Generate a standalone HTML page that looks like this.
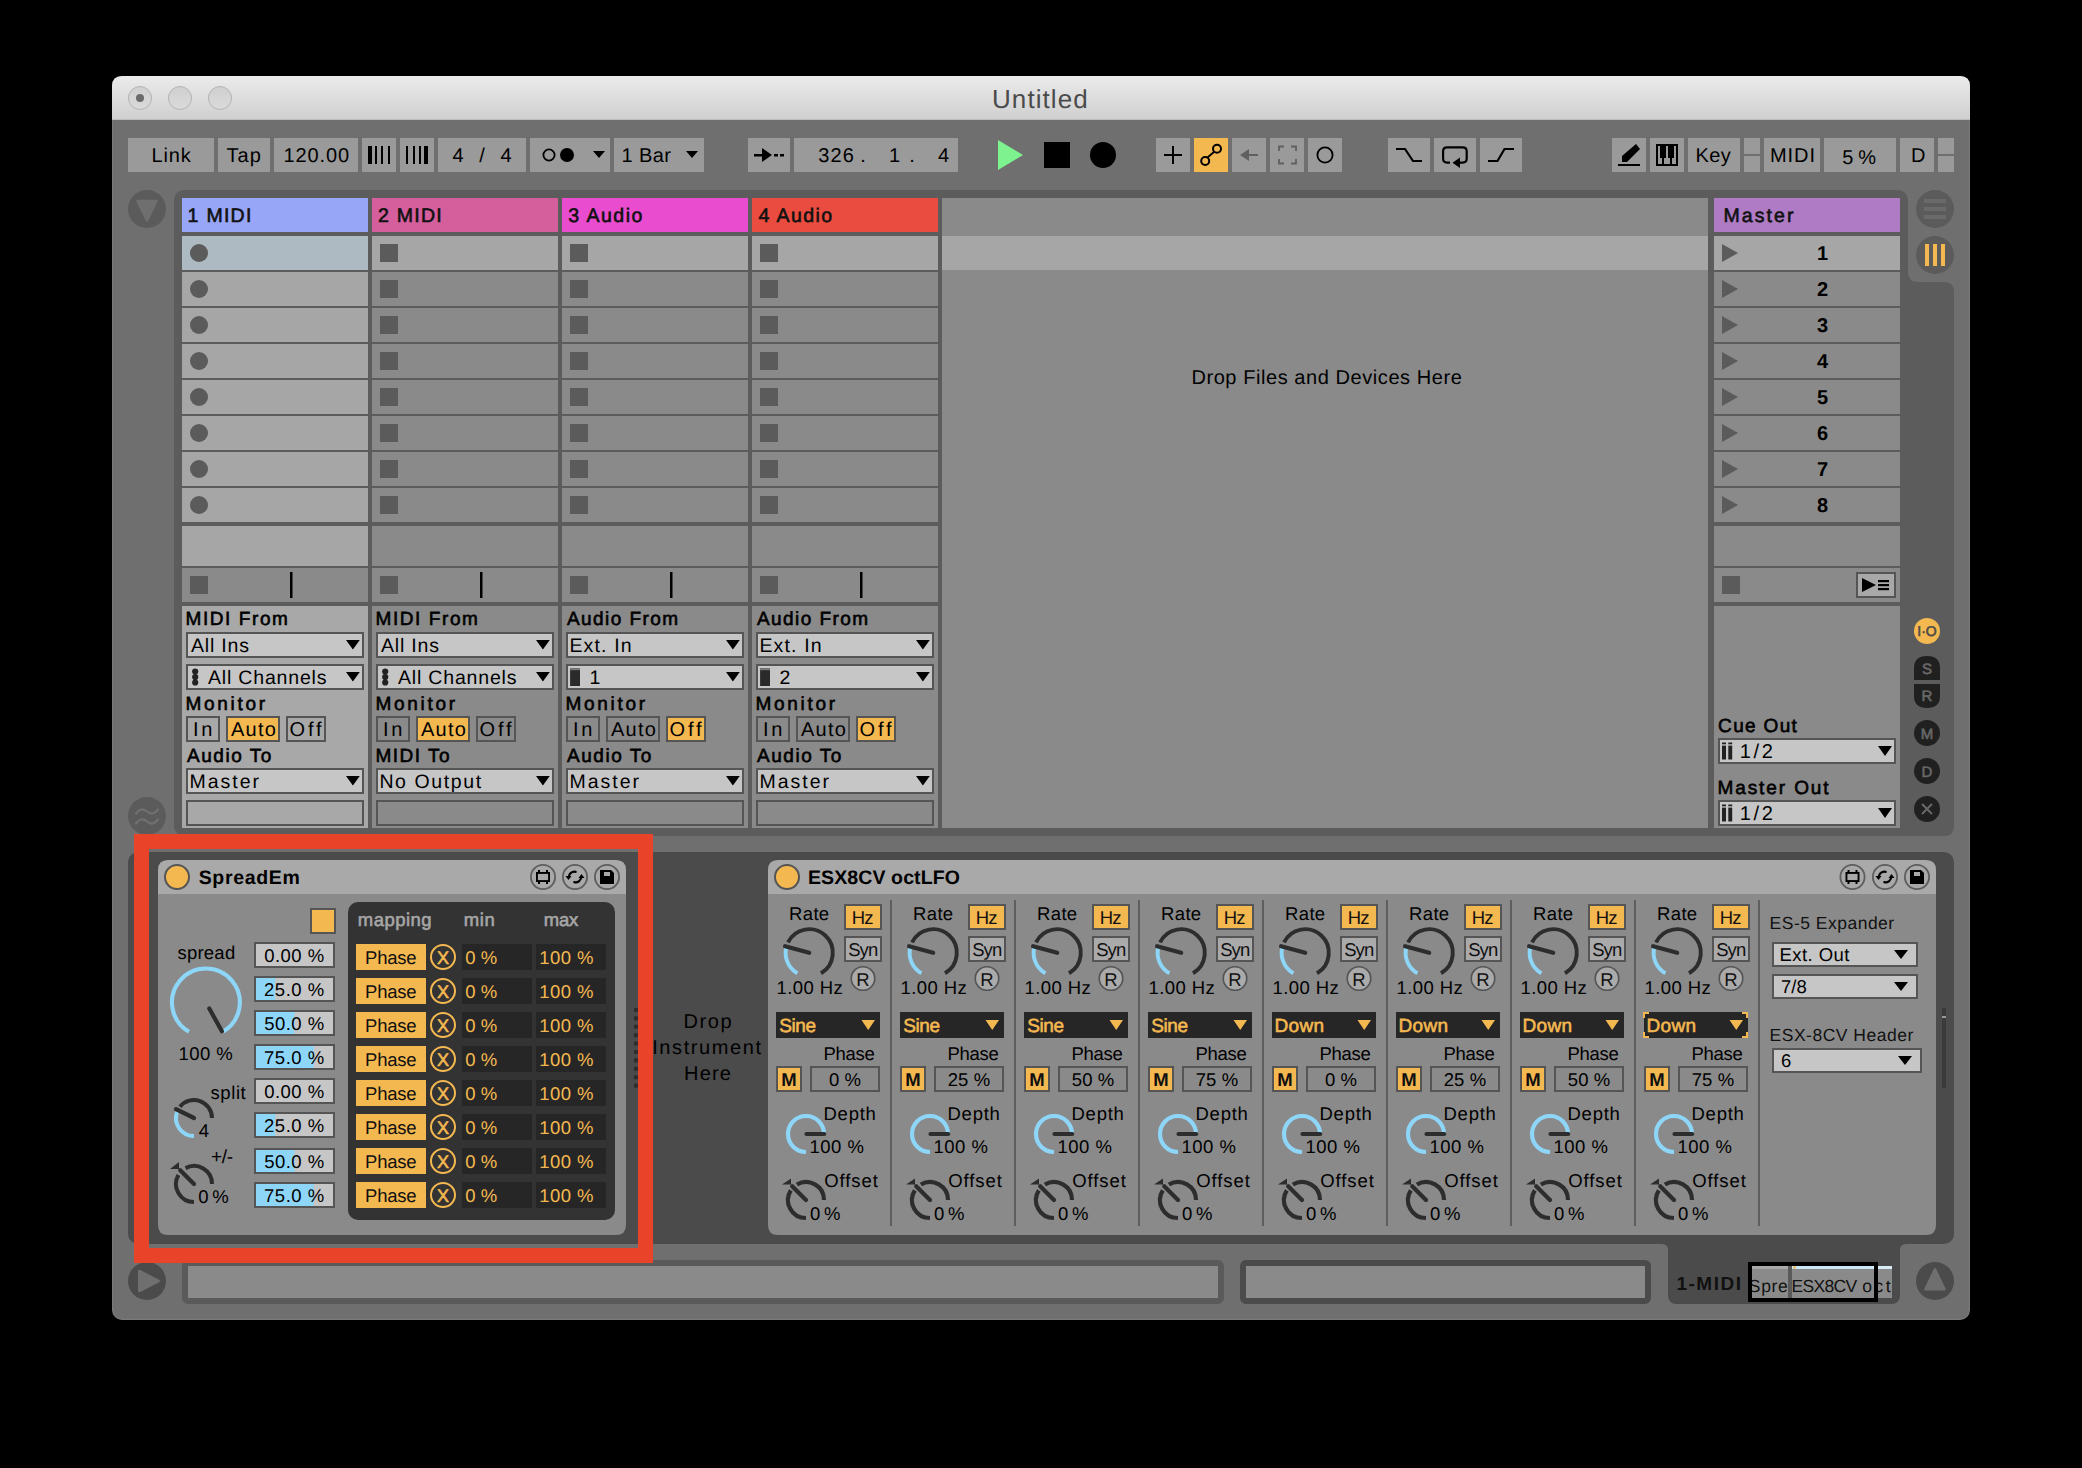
<!DOCTYPE html>
<html><head><meta charset="utf-8"><title>Untitled</title>
<style>html,body{margin:0;padding:0;background:#000;width:2082px;height:1468px;overflow:hidden}svg{display:block}</style>
</head><body>
<svg width="2082" height="1468" viewBox="0 0 2082 1468" text-rendering="geometricPrecision">
<rect x="0" y="0" width="2082" height="1468" rx="0" fill="#000" />
<rect x="112.6" y="76.6" width="1856.8" height="1242.8" rx="9.4" fill="#6f6f6f" stroke="#7a7a7a" stroke-width="1.2" />
<defs><linearGradient id="tg" x1="0" y1="0" x2="0" y2="1"><stop offset="0" stop-color="#ebebeb"/><stop offset="1" stop-color="#cfcfcf"/></linearGradient><linearGradient id="tl" x1="0" y1="0" x2="0" y2="1"><stop offset="0" stop-color="#d0d0d0"/><stop offset="1" stop-color="#dadada"/></linearGradient></defs>
<path d="M112,120 L112,86 Q112,76 122,76 L1960,76 Q1970,76 1970,86 L1970,120 Z" fill="url(#tg)" />
<rect x="112" y="119" width="1858" height="1" rx="0" fill="#bdbdbd" />
<circle cx="140" cy="98" r="11.5" fill="url(#tl)" stroke="#b3b3b3" stroke-width="1"/>
<circle cx="180" cy="98" r="11.5" fill="url(#tl)" stroke="#b3b3b3" stroke-width="1"/>
<circle cx="220" cy="98" r="11.5" fill="url(#tl)" stroke="#b3b3b3" stroke-width="1"/>
<circle cx="140" cy="98" r="4" fill="#6a6a6a"/>
<text x="992.0" y="108" font-family="Liberation Sans" font-size="26" font-weight="400" fill="#4b4b4b" text-anchor="start" letter-spacing="1.07" >Untitled</text>
<rect x="128" y="138" width="86" height="34" rx="0" fill="#9a9a9a" />
<rect x="218" y="138" width="52" height="34" rx="0" fill="#9a9a9a" />
<rect x="274" y="138" width="84" height="34" rx="0" fill="#9a9a9a" />
<rect x="362" y="138" width="34" height="34" rx="0" fill="#9a9a9a" />
<rect x="400" y="138" width="34" height="34" rx="0" fill="#9a9a9a" />
<rect x="438" y="138" width="88" height="34" rx="0" fill="#9a9a9a" />
<rect x="530" y="138" width="80" height="34" rx="0" fill="#9a9a9a" />
<rect x="614" y="138" width="90" height="34" rx="0" fill="#9a9a9a" />
<rect x="748" y="138" width="42" height="34" rx="0" fill="#9a9a9a" />
<rect x="794" y="138" width="164" height="34" rx="0" fill="#9a9a9a" />
<rect x="1156" y="138" width="34" height="34" rx="0" fill="#9a9a9a" />
<rect x="1194" y="138" width="34" height="34" rx="0" fill="#f4b850" />
<rect x="1232" y="138" width="34" height="34" rx="0" fill="#9a9a9a" />
<rect x="1270" y="138" width="34" height="34" rx="0" fill="#9a9a9a" />
<rect x="1308" y="138" width="34" height="34" rx="0" fill="#9a9a9a" />
<rect x="1388" y="138" width="42" height="34" rx="0" fill="#9a9a9a" />
<rect x="1434" y="138" width="42" height="34" rx="0" fill="#9a9a9a" />
<rect x="1480" y="138" width="42" height="34" rx="0" fill="#9a9a9a" />
<rect x="1612" y="138" width="34" height="34" rx="0" fill="#9a9a9a" />
<rect x="1650" y="138" width="34" height="34" rx="0" fill="#9a9a9a" />
<rect x="1688" y="138" width="52" height="34" rx="0" fill="#9a9a9a" />
<rect x="1764" y="138" width="56" height="34" rx="0" fill="#9a9a9a" />
<rect x="1824" y="138" width="72" height="34" rx="0" fill="#9a9a9a" />
<rect x="1900" y="138" width="34" height="34" rx="0" fill="#9a9a9a" />
<rect x="1744" y="138" width="16" height="16" rx="0" fill="#9a9a9a" />
<rect x="1744" y="156" width="16" height="16" rx="0" fill="#9a9a9a" />
<rect x="1938" y="138" width="16" height="16" rx="0" fill="#9a9a9a" />
<rect x="1938" y="156" width="16" height="16" rx="0" fill="#9a9a9a" />
<text x="151.4" y="162" font-family="Liberation Sans" font-size="20" font-weight="400" fill="#000" text-anchor="start" letter-spacing="0.93" >Link</text>
<text x="226.6" y="162" font-family="Liberation Sans" font-size="20" font-weight="400" fill="#000" text-anchor="start" letter-spacing="1.0" >Tap</text>
<text x="283.5" y="162" font-family="Liberation Sans" font-size="20" font-weight="400" fill="#000" text-anchor="start" letter-spacing="0.88" >120.00</text>
<rect x="368" y="146" width="4" height="18" rx="0" fill="#000" />
<rect x="375" y="146" width="2" height="18" rx="0" fill="#000" />
<rect x="381" y="146" width="2" height="18" rx="0" fill="#000" />
<rect x="388" y="146" width="2" height="18" rx="0" fill="#000" />
<rect x="406" y="146" width="2" height="18" rx="0" fill="#000" />
<rect x="413" y="146" width="2" height="18" rx="0" fill="#000" />
<rect x="419" y="146" width="2" height="18" rx="0" fill="#000" />
<rect x="424" y="146" width="4" height="18" rx="0" fill="#000" />
<text x="458" y="162" font-family="Liberation Sans" font-size="20" font-weight="400" fill="#000" text-anchor="middle" >4</text>
<text x="482" y="162" font-family="Liberation Sans" font-size="20" font-weight="400" fill="#000" text-anchor="middle" >/</text>
<text x="506" y="162" font-family="Liberation Sans" font-size="20" font-weight="400" fill="#000" text-anchor="middle" >4</text>
<circle cx="549" cy="155" r="5.6" fill="none" stroke="#000" stroke-width="1.8"/>
<circle cx="567" cy="155" r="7" fill="#000"/>
<polygon points="593,151 605,151 599,158" fill="#000"/>
<text x="621.5" y="162" font-family="Liberation Sans" font-size="20" font-weight="400" fill="#000" text-anchor="start" letter-spacing="0.4" >1 Bar</text>
<polygon points="686,151 698,151 692,158" fill="#000"/>
<rect x="754" y="154" width="8" height="2.5" rx="0" fill="#000" />
<polygon points="762,148 772,155 762,162" fill="#000"/>
<rect x="774" y="154" width="4" height="2.5" rx="0" fill="#000" />
<rect x="780" y="154" width="4" height="2.5" rx="0" fill="#000" />
<text x="818.3" y="162" font-family="Liberation Sans" font-size="20" font-weight="400" fill="#000" text-anchor="start" letter-spacing="1.1" >326</text>
<text x="863" y="162" font-family="Liberation Sans" font-size="20" font-weight="400" fill="#000" text-anchor="middle" >.</text>
<text x="900" y="162" font-family="Liberation Sans" font-size="20" font-weight="400" fill="#000" text-anchor="end" >1</text>
<text x="912" y="162" font-family="Liberation Sans" font-size="20" font-weight="400" fill="#000" text-anchor="middle" >.</text>
<text x="949" y="162" font-family="Liberation Sans" font-size="20" font-weight="400" fill="#000" text-anchor="end" >4</text>
<polygon points="998,140 1023,155 998,170" fill="#7ef28f"/>
<rect x="1044" y="142" width="26" height="26" rx="0" fill="#000" />
<circle cx="1103" cy="155" r="13" fill="#000"/>
<rect x="1164" y="154" width="18" height="2" rx="0" fill="#000" />
<rect x="1172" y="146" width="2" height="18" rx="0" fill="#000" />
<circle cx="1205.2" cy="161" r="4.0" fill="none" stroke="#000" stroke-width="2"/>
<circle cx="1217" cy="148.7" r="4.0" fill="none" stroke="#000" stroke-width="2"/>
<line x1="1207.5" y1="157.5" x2="1214.5" y2="151.5" stroke="#000" stroke-width="1.8"/>
<polygon points="1240,155 1249,149 1249,161" fill="#606060"/>
<rect x="1248" y="154" width="10" height="2" rx="0" fill="#606060" />
<path d="M1279,151 V146.5 H1284 M1291,146.5 H1296 V151 M1296,159 V163.5 H1291 M1284,163.5 H1279 V159" fill="none" stroke="#606060" stroke-width="1.8" />
<circle cx="1325" cy="155" r="7.6" fill="none" stroke="#000" stroke-width="1.8"/>
<path d="M1396,149 H1405 L1413,161 H1422" fill="none" stroke="#000" stroke-width="2.2" />
<path d="M1450,162.6 H1447 Q1443.1,162.6 1443.1,158.6 V151.2 Q1443.1,147.3 1447,147.3 H1462.7 Q1466.7,147.3 1466.7,151.2 V158.6 Q1466.7,162.6 1462.7,162.6 H1459" fill="none" stroke="#000" stroke-width="2.2" />
<polygon points="1452.5,162.7 1460,157.5 1460,168" fill="#000"/>
<path d="M1488,161 H1497.5 L1504.5,149 H1514" fill="none" stroke="#000" stroke-width="2.2" />
<polygon points="1622,162 1622,156 1636,144 1640,149 1627,162" fill="#000"/>
<rect x="1618" y="164" width="22" height="2" rx="0" fill="#000" />
<rect x="1657.0" y="145.0" width="20" height="20" rx="0" fill="none" stroke="#000" stroke-width="2" />
<rect x="1660" y="146" width="6" height="12" rx="0" fill="#000" />
<rect x="1668" y="146" width="6" height="12" rx="0" fill="#000" />
<rect x="1662" y="158" width="2" height="6" rx="0" fill="#000" />
<rect x="1670" y="158" width="2" height="6" rx="0" fill="#000" />
<text x="1695.4" y="162" font-family="Liberation Sans" font-size="20" font-weight="400" fill="#000" text-anchor="start" letter-spacing="0.5" >Key</text>
<text x="1769.9" y="162" font-family="Liberation Sans" font-size="20" font-weight="400" fill="#000" text-anchor="start" letter-spacing="0.97" >MIDI</text>
<text x="1842.2" y="164" font-family="Liberation Sans" font-size="20" font-weight="400" fill="#000" text-anchor="start" letter-spacing="-0.3" >5 %</text>
<text x="1911" y="162" font-family="Liberation Sans" font-size="20" font-weight="400" fill="#000" text-anchor="start" >D</text>
<circle cx="147" cy="209" r="19" fill="#5b5b5b"/>
<path d="M137.5,201 L156.5,201 L147,220.5 Z" fill="#6f6f6f" stroke="#6f6f6f" stroke-width="2.5" stroke-linejoin="round"/>
<circle cx="147" cy="816" r="19" fill="#5b5b5b"/>
<path d="M136,813.5 Q141,806.5 147,811.5 Q153,816.5 158,809.5" fill="none" stroke="#717171" stroke-width="2.2" stroke-linecap="round"/>
<path d="M136,823.5 Q141,816.5 147,821.5 Q153,826.5 158,819.5" fill="none" stroke="#717171" stroke-width="2.2" stroke-linecap="round"/>
<rect x="174" y="190" width="1734" height="646" rx="10" fill="#5c5c5c" />
<path d="M1898,282 L1944,282 Q1954,282 1954,292 L1954,826 Q1954,836 1944,836 L1898,836 Z" fill="#5c5c5c" />
<path d="M1908,272 L1908,282 L1918,282 Q1908,282 1908,272 Z" fill="#5c5c5c" />
<circle cx="1935" cy="209" r="19" fill="#5b5b5b"/>
<rect x="1924" y="199" width="22" height="4" rx="0" fill="#6a6a6a" />
<rect x="1924" y="207" width="22" height="4" rx="0" fill="#6a6a6a" />
<rect x="1924" y="215" width="22" height="4" rx="0" fill="#6a6a6a" />
<circle cx="1935" cy="255" r="19" fill="#5b5b5b"/>
<rect x="1925" y="244" width="4" height="22" rx="0" fill="#f4b850" />
<rect x="1933" y="244" width="4" height="22" rx="0" fill="#f4b850" />
<rect x="1941" y="244" width="4" height="22" rx="0" fill="#f4b850" />
<rect x="182" y="198" width="186" height="34" rx="0" fill="#97a6f6" />
<text x="187.6" y="222" font-family="Liberation Sans" font-size="19.5" font-weight="400" fill="#111" text-anchor="start" letter-spacing="1.26" stroke="#111" stroke-width="0.6" >1 MIDI</text>
<rect x="182" y="236" width="186" height="34" rx="0" fill="#adbac2" />
<circle cx="199" cy="253" r="9" fill="#5b5b5b"/>
<rect x="182" y="272" width="186" height="34" rx="0" fill="#a6a6a6" />
<circle cx="199" cy="289" r="9" fill="#5b5b5b"/>
<rect x="182" y="308" width="186" height="34" rx="0" fill="#a6a6a6" />
<circle cx="199" cy="325" r="9" fill="#5b5b5b"/>
<rect x="182" y="344" width="186" height="34" rx="0" fill="#a6a6a6" />
<circle cx="199" cy="361" r="9" fill="#5b5b5b"/>
<rect x="182" y="380" width="186" height="34" rx="0" fill="#a6a6a6" />
<circle cx="199" cy="397" r="9" fill="#5b5b5b"/>
<rect x="182" y="416" width="186" height="34" rx="0" fill="#a6a6a6" />
<circle cx="199" cy="433" r="9" fill="#5b5b5b"/>
<rect x="182" y="452" width="186" height="34" rx="0" fill="#a6a6a6" />
<circle cx="199" cy="469" r="9" fill="#5b5b5b"/>
<rect x="182" y="488" width="186" height="34" rx="0" fill="#a6a6a6" />
<circle cx="199" cy="505" r="9" fill="#5b5b5b"/>
<rect x="182" y="526" width="186" height="40" rx="0" fill="#a6a6a6" />
<rect x="182" y="568" width="186" height="34" rx="0" fill="#8a8a8a" />
<rect x="190" y="576" width="18" height="18" rx="0" fill="#5b5b5b" />
<rect x="290" y="572" width="2.5" height="26" rx="0" fill="#000" />
<rect x="182" y="606" width="186" height="222" rx="0" fill="#a8a8a8" />
<text x="185.5" y="625" font-family="Liberation Sans" font-size="19" font-weight="400" fill="#000" text-anchor="start" letter-spacing="1.59" stroke="#000" stroke-width="0.6" >MIDI From</text>
<rect x="187.0" y="633.0" width="176" height="24" rx="0" fill="#c6c6c6" stroke="#555555" stroke-width="2" />
<text x="191.0" y="652" font-family="Liberation Sans" font-size="19.5" font-weight="400" fill="#000" text-anchor="start" letter-spacing="0.8" >All Ins</text>
<polygon points="346,640 359.8,640 352.9,649.5" fill="#000"/>
<rect x="187.0" y="665.0" width="176" height="24" rx="0" fill="#c6c6c6" stroke="#555555" stroke-width="2" />
<circle cx="195.2" cy="671.5" r="3.1" fill="#222"/>
<circle cx="195.2" cy="677.0" r="3.1" fill="#222"/>
<circle cx="195.2" cy="682.5" r="3.1" fill="#222"/>
<text x="208.0" y="684" font-family="Liberation Sans" font-size="19.5" font-weight="400" fill="#000" text-anchor="start" letter-spacing="0.82" >All Channels</text>
<polygon points="346,672 359.8,672 352.9,681.5" fill="#000"/>
<text x="185.5" y="710" font-family="Liberation Sans" font-size="19" font-weight="400" fill="#000" text-anchor="start" letter-spacing="2.72" stroke="#000" stroke-width="0.6" >Monitor</text>
<rect x="187.0" y="717.0" width="32" height="24" rx="0" fill="#a8a8a8" stroke="#555555" stroke-width="2" />
<text x="193.05" y="736" font-family="Liberation Sans" font-size="20" font-weight="400" fill="#000" text-anchor="start" letter-spacing="2.6" >In</text>
<rect x="227.0" y="717.0" width="52" height="24" rx="0" fill="#f4b850" stroke="#555555" stroke-width="2" />
<text x="230.9" y="736" font-family="Liberation Sans" font-size="20" font-weight="400" fill="#000" text-anchor="start" letter-spacing="1.3" >Auto</text>
<rect x="287.0" y="717.0" width="38" height="24" rx="0" fill="#a8a8a8" stroke="#555555" stroke-width="2" />
<text x="289.5" y="736" font-family="Liberation Sans" font-size="20" font-weight="400" fill="#000" text-anchor="start" letter-spacing="2.85" >Off</text>
<text x="187.0" y="762" font-family="Liberation Sans" font-size="19" font-weight="400" fill="#000" text-anchor="start" letter-spacing="1.53" stroke="#000" stroke-width="0.6" >Audio To</text>
<rect x="187.0" y="769.0" width="176" height="24" rx="0" fill="#c6c6c6" stroke="#555555" stroke-width="2" />
<text x="189.4" y="788" font-family="Liberation Sans" font-size="19.5" font-weight="400" fill="#000" text-anchor="start" letter-spacing="2.02" >Master</text>
<polygon points="346,776 359.8,776 352.9,785.5" fill="#000"/>
<rect x="187.0" y="801.0" width="176" height="24" rx="0" fill="#a8a8a8" stroke="#555555" stroke-width="2" />
<rect x="372" y="198" width="186" height="34" rx="0" fill="#d55e9c" />
<text x="378.1" y="222" font-family="Liberation Sans" font-size="19.5" font-weight="400" fill="#111" text-anchor="start" letter-spacing="1.24" stroke="#111" stroke-width="0.6" >2 MIDI</text>
<rect x="372" y="236" width="186" height="34" rx="0" fill="#a6a6a6" />
<rect x="380" y="244" width="18" height="18" rx="0" fill="#5b5b5b" />
<rect x="372" y="272" width="186" height="34" rx="0" fill="#8a8a8a" />
<rect x="380" y="280" width="18" height="18" rx="0" fill="#5b5b5b" />
<rect x="372" y="308" width="186" height="34" rx="0" fill="#8a8a8a" />
<rect x="380" y="316" width="18" height="18" rx="0" fill="#5b5b5b" />
<rect x="372" y="344" width="186" height="34" rx="0" fill="#8a8a8a" />
<rect x="380" y="352" width="18" height="18" rx="0" fill="#5b5b5b" />
<rect x="372" y="380" width="186" height="34" rx="0" fill="#8a8a8a" />
<rect x="380" y="388" width="18" height="18" rx="0" fill="#5b5b5b" />
<rect x="372" y="416" width="186" height="34" rx="0" fill="#8a8a8a" />
<rect x="380" y="424" width="18" height="18" rx="0" fill="#5b5b5b" />
<rect x="372" y="452" width="186" height="34" rx="0" fill="#8a8a8a" />
<rect x="380" y="460" width="18" height="18" rx="0" fill="#5b5b5b" />
<rect x="372" y="488" width="186" height="34" rx="0" fill="#8a8a8a" />
<rect x="380" y="496" width="18" height="18" rx="0" fill="#5b5b5b" />
<rect x="372" y="526" width="186" height="40" rx="0" fill="#8a8a8a" />
<rect x="372" y="568" width="186" height="34" rx="0" fill="#8a8a8a" />
<rect x="380" y="576" width="18" height="18" rx="0" fill="#5b5b5b" />
<rect x="480" y="572" width="2.5" height="26" rx="0" fill="#000" />
<rect x="372" y="606" width="186" height="222" rx="0" fill="#8a8a8a" />
<text x="375.5" y="625" font-family="Liberation Sans" font-size="19" font-weight="400" fill="#000" text-anchor="start" letter-spacing="1.59" stroke="#000" stroke-width="0.6" >MIDI From</text>
<rect x="377.0" y="633.0" width="176" height="24" rx="0" fill="#c6c6c6" stroke="#555555" stroke-width="2" />
<text x="381.0" y="652" font-family="Liberation Sans" font-size="19.5" font-weight="400" fill="#000" text-anchor="start" letter-spacing="0.8" >All Ins</text>
<polygon points="536,640 549.8,640 542.9,649.5" fill="#000"/>
<rect x="377.0" y="665.0" width="176" height="24" rx="0" fill="#c6c6c6" stroke="#555555" stroke-width="2" />
<circle cx="385.2" cy="671.5" r="3.1" fill="#222"/>
<circle cx="385.2" cy="677.0" r="3.1" fill="#222"/>
<circle cx="385.2" cy="682.5" r="3.1" fill="#222"/>
<text x="398.0" y="684" font-family="Liberation Sans" font-size="19.5" font-weight="400" fill="#000" text-anchor="start" letter-spacing="0.82" >All Channels</text>
<polygon points="536,672 549.8,672 542.9,681.5" fill="#000"/>
<text x="375.5" y="710" font-family="Liberation Sans" font-size="19" font-weight="400" fill="#000" text-anchor="start" letter-spacing="2.72" stroke="#000" stroke-width="0.6" >Monitor</text>
<rect x="377.0" y="717.0" width="32" height="24" rx="0" fill="#8a8a8a" stroke="#555555" stroke-width="2" />
<text x="383.05" y="736" font-family="Liberation Sans" font-size="20" font-weight="400" fill="#000" text-anchor="start" letter-spacing="2.6" >In</text>
<rect x="417.0" y="717.0" width="52" height="24" rx="0" fill="#f4b850" stroke="#555555" stroke-width="2" />
<text x="420.9" y="736" font-family="Liberation Sans" font-size="20" font-weight="400" fill="#000" text-anchor="start" letter-spacing="1.3" >Auto</text>
<rect x="477.0" y="717.0" width="38" height="24" rx="0" fill="#8a8a8a" stroke="#555555" stroke-width="2" />
<text x="479.5" y="736" font-family="Liberation Sans" font-size="20" font-weight="400" fill="#000" text-anchor="start" letter-spacing="2.85" >Off</text>
<text x="375.5" y="762" font-family="Liberation Sans" font-size="19" font-weight="400" fill="#000" text-anchor="start" letter-spacing="1.5" stroke="#000" stroke-width="0.6" >MIDI To</text>
<rect x="377.0" y="769.0" width="176" height="24" rx="0" fill="#c6c6c6" stroke="#555555" stroke-width="2" />
<text x="379.4" y="788" font-family="Liberation Sans" font-size="19.5" font-weight="400" fill="#000" text-anchor="start" letter-spacing="1.6" >No Output</text>
<polygon points="536,776 549.8,776 542.9,785.5" fill="#000"/>
<rect x="377.0" y="801.0" width="176" height="24" rx="0" fill="#8a8a8a" stroke="#555555" stroke-width="2" />
<rect x="562" y="198" width="186" height="34" rx="0" fill="#ea4ccf" />
<text x="568.3" y="222" font-family="Liberation Sans" font-size="19.5" font-weight="400" fill="#111" text-anchor="start" letter-spacing="1.5" stroke="#111" stroke-width="0.6" >3 Audio</text>
<rect x="562" y="236" width="186" height="34" rx="0" fill="#a6a6a6" />
<rect x="570" y="244" width="18" height="18" rx="0" fill="#5b5b5b" />
<rect x="562" y="272" width="186" height="34" rx="0" fill="#8a8a8a" />
<rect x="570" y="280" width="18" height="18" rx="0" fill="#5b5b5b" />
<rect x="562" y="308" width="186" height="34" rx="0" fill="#8a8a8a" />
<rect x="570" y="316" width="18" height="18" rx="0" fill="#5b5b5b" />
<rect x="562" y="344" width="186" height="34" rx="0" fill="#8a8a8a" />
<rect x="570" y="352" width="18" height="18" rx="0" fill="#5b5b5b" />
<rect x="562" y="380" width="186" height="34" rx="0" fill="#8a8a8a" />
<rect x="570" y="388" width="18" height="18" rx="0" fill="#5b5b5b" />
<rect x="562" y="416" width="186" height="34" rx="0" fill="#8a8a8a" />
<rect x="570" y="424" width="18" height="18" rx="0" fill="#5b5b5b" />
<rect x="562" y="452" width="186" height="34" rx="0" fill="#8a8a8a" />
<rect x="570" y="460" width="18" height="18" rx="0" fill="#5b5b5b" />
<rect x="562" y="488" width="186" height="34" rx="0" fill="#8a8a8a" />
<rect x="570" y="496" width="18" height="18" rx="0" fill="#5b5b5b" />
<rect x="562" y="526" width="186" height="40" rx="0" fill="#8a8a8a" />
<rect x="562" y="568" width="186" height="34" rx="0" fill="#8a8a8a" />
<rect x="570" y="576" width="18" height="18" rx="0" fill="#5b5b5b" />
<rect x="670" y="572" width="2.5" height="26" rx="0" fill="#000" />
<rect x="562" y="606" width="186" height="222" rx="0" fill="#8a8a8a" />
<text x="567.0" y="625" font-family="Liberation Sans" font-size="19" font-weight="400" fill="#000" text-anchor="start" letter-spacing="1.42" stroke="#000" stroke-width="0.6" >Audio From</text>
<rect x="567.0" y="633.0" width="176" height="24" rx="0" fill="#c6c6c6" stroke="#555555" stroke-width="2" />
<text x="569.4" y="652" font-family="Liberation Sans" font-size="19.5" font-weight="400" fill="#000" text-anchor="start" letter-spacing="1.15" >Ext. In</text>
<polygon points="726,640 739.8,640 732.9,649.5" fill="#000"/>
<rect x="567.0" y="665.0" width="176" height="24" rx="0" fill="#c6c6c6" stroke="#555555" stroke-width="2" />
<rect x="570.1" y="668.2" width="9.899999999999977" height="17.799999999999955" rx="0" fill="#2a2a2a" />
<rect x="570.1" y="668.2" width="9.899999999999977" height="2.0" rx="0" fill="#7a7a7a" />
<text x="589.5" y="684" font-family="Liberation Sans" font-size="19.5" font-weight="400" fill="#000" text-anchor="start" >1</text>
<polygon points="726,672 739.8,672 732.9,681.5" fill="#000"/>
<text x="565.5" y="710" font-family="Liberation Sans" font-size="19" font-weight="400" fill="#000" text-anchor="start" letter-spacing="2.72" stroke="#000" stroke-width="0.6" >Monitor</text>
<rect x="567.0" y="717.0" width="32" height="24" rx="0" fill="#8a8a8a" stroke="#555555" stroke-width="2" />
<text x="573.05" y="736" font-family="Liberation Sans" font-size="20" font-weight="400" fill="#000" text-anchor="start" letter-spacing="2.6" >In</text>
<rect x="607.0" y="717.0" width="52" height="24" rx="0" fill="#8a8a8a" stroke="#555555" stroke-width="2" />
<text x="610.9" y="736" font-family="Liberation Sans" font-size="20" font-weight="400" fill="#000" text-anchor="start" letter-spacing="1.3" >Auto</text>
<rect x="667.0" y="717.0" width="38" height="24" rx="0" fill="#f4b850" stroke="#555555" stroke-width="2" />
<text x="669.5" y="736" font-family="Liberation Sans" font-size="20" font-weight="400" fill="#000" text-anchor="start" letter-spacing="2.85" >Off</text>
<text x="567.0" y="762" font-family="Liberation Sans" font-size="19" font-weight="400" fill="#000" text-anchor="start" letter-spacing="1.53" stroke="#000" stroke-width="0.6" >Audio To</text>
<rect x="567.0" y="769.0" width="176" height="24" rx="0" fill="#c6c6c6" stroke="#555555" stroke-width="2" />
<text x="569.4" y="788" font-family="Liberation Sans" font-size="19.5" font-weight="400" fill="#000" text-anchor="start" letter-spacing="2.02" >Master</text>
<polygon points="726,776 739.8,776 732.9,785.5" fill="#000"/>
<rect x="567.0" y="801.0" width="176" height="24" rx="0" fill="#8a8a8a" stroke="#555555" stroke-width="2" />
<rect x="752" y="198" width="186" height="34" rx="0" fill="#ea4c3f" />
<text x="758.6" y="222" font-family="Liberation Sans" font-size="19.5" font-weight="400" fill="#111" text-anchor="start" letter-spacing="1.42" stroke="#111" stroke-width="0.6" >4 Audio</text>
<rect x="752" y="236" width="186" height="34" rx="0" fill="#a6a6a6" />
<rect x="760" y="244" width="18" height="18" rx="0" fill="#5b5b5b" />
<rect x="752" y="272" width="186" height="34" rx="0" fill="#8a8a8a" />
<rect x="760" y="280" width="18" height="18" rx="0" fill="#5b5b5b" />
<rect x="752" y="308" width="186" height="34" rx="0" fill="#8a8a8a" />
<rect x="760" y="316" width="18" height="18" rx="0" fill="#5b5b5b" />
<rect x="752" y="344" width="186" height="34" rx="0" fill="#8a8a8a" />
<rect x="760" y="352" width="18" height="18" rx="0" fill="#5b5b5b" />
<rect x="752" y="380" width="186" height="34" rx="0" fill="#8a8a8a" />
<rect x="760" y="388" width="18" height="18" rx="0" fill="#5b5b5b" />
<rect x="752" y="416" width="186" height="34" rx="0" fill="#8a8a8a" />
<rect x="760" y="424" width="18" height="18" rx="0" fill="#5b5b5b" />
<rect x="752" y="452" width="186" height="34" rx="0" fill="#8a8a8a" />
<rect x="760" y="460" width="18" height="18" rx="0" fill="#5b5b5b" />
<rect x="752" y="488" width="186" height="34" rx="0" fill="#8a8a8a" />
<rect x="760" y="496" width="18" height="18" rx="0" fill="#5b5b5b" />
<rect x="752" y="526" width="186" height="40" rx="0" fill="#8a8a8a" />
<rect x="752" y="568" width="186" height="34" rx="0" fill="#8a8a8a" />
<rect x="760" y="576" width="18" height="18" rx="0" fill="#5b5b5b" />
<rect x="860" y="572" width="2.5" height="26" rx="0" fill="#000" />
<rect x="752" y="606" width="186" height="222" rx="0" fill="#8a8a8a" />
<text x="757.0" y="625" font-family="Liberation Sans" font-size="19" font-weight="400" fill="#000" text-anchor="start" letter-spacing="1.42" stroke="#000" stroke-width="0.6" >Audio From</text>
<rect x="757.0" y="633.0" width="176" height="24" rx="0" fill="#c6c6c6" stroke="#555555" stroke-width="2" />
<text x="759.4" y="652" font-family="Liberation Sans" font-size="19.5" font-weight="400" fill="#000" text-anchor="start" letter-spacing="1.15" >Ext. In</text>
<polygon points="916,640 929.8,640 922.9,649.5" fill="#000"/>
<rect x="757.0" y="665.0" width="176" height="24" rx="0" fill="#c6c6c6" stroke="#555555" stroke-width="2" />
<rect x="760.1" y="668.2" width="9.899999999999977" height="17.799999999999955" rx="0" fill="#2a2a2a" />
<rect x="760.1" y="668.2" width="9.899999999999977" height="2.0" rx="0" fill="#7a7a7a" />
<text x="779.5" y="684" font-family="Liberation Sans" font-size="19.5" font-weight="400" fill="#000" text-anchor="start" >2</text>
<polygon points="916,672 929.8,672 922.9,681.5" fill="#000"/>
<text x="755.5" y="710" font-family="Liberation Sans" font-size="19" font-weight="400" fill="#000" text-anchor="start" letter-spacing="2.72" stroke="#000" stroke-width="0.6" >Monitor</text>
<rect x="757.0" y="717.0" width="32" height="24" rx="0" fill="#8a8a8a" stroke="#555555" stroke-width="2" />
<text x="763.05" y="736" font-family="Liberation Sans" font-size="20" font-weight="400" fill="#000" text-anchor="start" letter-spacing="2.6" >In</text>
<rect x="797.0" y="717.0" width="52" height="24" rx="0" fill="#8a8a8a" stroke="#555555" stroke-width="2" />
<text x="800.9" y="736" font-family="Liberation Sans" font-size="20" font-weight="400" fill="#000" text-anchor="start" letter-spacing="1.3" >Auto</text>
<rect x="857.0" y="717.0" width="38" height="24" rx="0" fill="#f4b850" stroke="#555555" stroke-width="2" />
<text x="859.5" y="736" font-family="Liberation Sans" font-size="20" font-weight="400" fill="#000" text-anchor="start" letter-spacing="2.85" >Off</text>
<text x="757.0" y="762" font-family="Liberation Sans" font-size="19" font-weight="400" fill="#000" text-anchor="start" letter-spacing="1.53" stroke="#000" stroke-width="0.6" >Audio To</text>
<rect x="757.0" y="769.0" width="176" height="24" rx="0" fill="#c6c6c6" stroke="#555555" stroke-width="2" />
<text x="759.4" y="788" font-family="Liberation Sans" font-size="19.5" font-weight="400" fill="#000" text-anchor="start" letter-spacing="2.02" >Master</text>
<polygon points="916,776 929.8,776 922.9,785.5" fill="#000"/>
<rect x="757.0" y="801.0" width="176" height="24" rx="0" fill="#8a8a8a" stroke="#555555" stroke-width="2" />
<rect x="942" y="198" width="766" height="630" rx="0" fill="#8a8a8a" />
<rect x="942" y="236" width="766" height="34" rx="0" fill="#a6a6a6" />
<text x="1191.4" y="384" font-family="Liberation Sans" font-size="20" font-weight="400" fill="#000" text-anchor="start" letter-spacing="0.57" >Drop Files and Devices Here</text>
<rect x="1714" y="198" width="186" height="34" rx="0" fill="#ae7bc4" />
<text x="1723.4" y="222" font-family="Liberation Sans" font-size="19.5" font-weight="400" fill="#111" text-anchor="start" letter-spacing="2.1" stroke="#111" stroke-width="0.6" >Master</text>
<rect x="1714" y="236" width="186" height="34" rx="0" fill="#a6a6a6" />
<polygon points="1722,244 1738,253 1722,262" fill="#5b5b5b"/>
<text x="1822.5" y="260" font-family="Liberation Sans" font-size="20" font-weight="700" fill="#000" text-anchor="middle" >1</text>
<rect x="1714" y="272" width="186" height="34" rx="0" fill="#8a8a8a" />
<polygon points="1722,280 1738,289 1722,298" fill="#5b5b5b"/>
<text x="1822.5" y="296" font-family="Liberation Sans" font-size="20" font-weight="700" fill="#000" text-anchor="middle" >2</text>
<rect x="1714" y="308" width="186" height="34" rx="0" fill="#8a8a8a" />
<polygon points="1722,316 1738,325 1722,334" fill="#5b5b5b"/>
<text x="1822.5" y="332" font-family="Liberation Sans" font-size="20" font-weight="700" fill="#000" text-anchor="middle" >3</text>
<rect x="1714" y="344" width="186" height="34" rx="0" fill="#8a8a8a" />
<polygon points="1722,352 1738,361 1722,370" fill="#5b5b5b"/>
<text x="1822.5" y="368" font-family="Liberation Sans" font-size="20" font-weight="700" fill="#000" text-anchor="middle" >4</text>
<rect x="1714" y="380" width="186" height="34" rx="0" fill="#8a8a8a" />
<polygon points="1722,388 1738,397 1722,406" fill="#5b5b5b"/>
<text x="1822.5" y="404" font-family="Liberation Sans" font-size="20" font-weight="700" fill="#000" text-anchor="middle" >5</text>
<rect x="1714" y="416" width="186" height="34" rx="0" fill="#8a8a8a" />
<polygon points="1722,424 1738,433 1722,442" fill="#5b5b5b"/>
<text x="1822.5" y="440" font-family="Liberation Sans" font-size="20" font-weight="700" fill="#000" text-anchor="middle" >6</text>
<rect x="1714" y="452" width="186" height="34" rx="0" fill="#8a8a8a" />
<polygon points="1722,460 1738,469 1722,478" fill="#5b5b5b"/>
<text x="1822.5" y="476" font-family="Liberation Sans" font-size="20" font-weight="700" fill="#000" text-anchor="middle" >7</text>
<rect x="1714" y="488" width="186" height="34" rx="0" fill="#8a8a8a" />
<polygon points="1722,496 1738,505 1722,514" fill="#5b5b5b"/>
<text x="1822.5" y="512" font-family="Liberation Sans" font-size="20" font-weight="700" fill="#000" text-anchor="middle" >8</text>
<rect x="1714" y="526" width="186" height="40" rx="0" fill="#8a8a8a" />
<rect x="1714" y="568" width="186" height="34" rx="0" fill="#8a8a8a" />
<rect x="1722" y="576" width="18" height="18" rx="0" fill="#5b5b5b" />
<rect x="1857.0" y="573.0" width="38" height="24" rx="0" fill="#a8a8a8" stroke="#555555" stroke-width="2" />
<polygon points="1862,578 1876,585 1862,592" fill="#000"/>
<rect x="1878" y="580" width="11" height="2.2000000000000455" rx="0" fill="#000" />
<rect x="1878" y="584" width="11" height="2.2000000000000455" rx="0" fill="#000" />
<rect x="1878" y="588" width="11" height="2.2000000000000455" rx="0" fill="#000" />
<rect x="1714" y="606" width="186" height="222" rx="0" fill="#8a8a8a" />
<text x="1718.1" y="732" font-family="Liberation Sans" font-size="19" font-weight="400" fill="#000" text-anchor="start" letter-spacing="1.33" stroke="#000" stroke-width="0.6" >Cue Out</text>
<text x="1717.5" y="794" font-family="Liberation Sans" font-size="19" font-weight="400" fill="#000" text-anchor="start" letter-spacing="1.9" stroke="#000" stroke-width="0.6" >Master Out</text>
<rect x="1719.0" y="739.0" width="176" height="24" rx="0" fill="#c6c6c6" stroke="#555555" stroke-width="2" />
<rect x="1722" y="742.5" width="4" height="17.0" rx="0" fill="#222" />
<rect x="1728.3" y="742.5" width="3.900000000000091" height="17.0" rx="0" fill="#222" />
<rect x="1721" y="744.3" width="13" height="1.3000000000000682" rx="0" fill="#c6c6c6" />
<text x="1739.8" y="758" font-family="Liberation Sans" font-size="20" font-weight="400" fill="#000" text-anchor="start" letter-spacing="2.65" >1/2</text>
<polygon points="1878,746 1892,746 1885,756" fill="#000"/>
<rect x="1719.0" y="801.0" width="176" height="24" rx="0" fill="#c6c6c6" stroke="#555555" stroke-width="2" />
<rect x="1722" y="804.5" width="4" height="17.0" rx="0" fill="#222" />
<rect x="1728.3" y="804.5" width="3.900000000000091" height="17.0" rx="0" fill="#222" />
<rect x="1721" y="806.3" width="13" height="1.3000000000000682" rx="0" fill="#c6c6c6" />
<text x="1739.8" y="820" font-family="Liberation Sans" font-size="20" font-weight="400" fill="#000" text-anchor="start" letter-spacing="2.65" >1/2</text>
<polygon points="1878,808 1892,808 1885,818" fill="#000"/>
<circle cx="1927" cy="631" r="13" fill="#f4b850"/>
<text x="1927" y="636" font-family="Liberation Sans" font-size="14" font-weight="400" fill="#4a4a4a" text-anchor="middle" stroke="#4a4a4a" stroke-width="0.6" >I·O</text>
<path d="M1914,680 V668 Q1914,656 1927,656 Q1940,656 1940,668 V680 Z" fill="#202020" />
<path d="M1914,684 V696 Q1914,708 1927,708 Q1940,708 1940,696 V684 Z" fill="#202020" />
<text x="1927" y="674" font-family="Liberation Sans" font-size="15" font-weight="400" fill="#686868" text-anchor="middle" stroke="#686868" stroke-width="0.6" >S</text>
<text x="1927" y="701" font-family="Liberation Sans" font-size="15" font-weight="400" fill="#686868" text-anchor="middle" stroke="#686868" stroke-width="0.6" >R</text>
<circle cx="1927" cy="733" r="13" fill="#202020"/>
<text x="1927" y="738.5" font-family="Liberation Sans" font-size="15" font-weight="400" fill="#686868" text-anchor="middle" stroke="#686868" stroke-width="0.6" >M</text>
<circle cx="1927" cy="771" r="13" fill="#202020"/>
<text x="1927" y="776.5" font-family="Liberation Sans" font-size="15" font-weight="400" fill="#686868" text-anchor="middle" stroke="#686868" stroke-width="0.6" >D</text>
<circle cx="1927" cy="809" r="13" fill="#202020"/>
<path d="M1922,804 L1932,814 M1932,804 L1922,814" fill="none" stroke="#686868" stroke-width="2" />
<rect x="128" y="852" width="1826" height="392" rx="10" fill="#4b4b4b" />
<rect x="1668" y="1234" width="232" height="70" rx="8" fill="#4b4b4b" />
<path d="M158,894 V870 Q158,860 168,860 H616 Q626,860 626,870 V894 Z" fill="#a9a9a9" />
<path d="M158,894 H626 V1225 Q626,1235 616,1235 H168 Q158,1235 158,1225 Z" fill="#8a8a8a" />
<circle cx="177" cy="877" r="12.0" fill="#f4b850" stroke="#555" stroke-width="2"/>
<text x="198.7" y="884" font-family="Liberation Sans" font-size="19.5" font-weight="700" fill="#000" text-anchor="start" letter-spacing="0.66" >SpreadEm</text>
<circle cx="543" cy="877" r="12.1" fill="#a9a9a9" stroke="#5d5d5d" stroke-width="1.8"/>
<rect x="536.95" y="872.95" width="12.1" height="8.1" rx="0" fill="none" stroke="#000" stroke-width="1.9" />
<rect x="538" y="870" width="2" height="2" rx="0" fill="#000" />
<rect x="546" y="870" width="2" height="2" rx="0" fill="#000" />
<rect x="538" y="882" width="2" height="2" rx="0" fill="#000" />
<rect x="546" y="882" width="2" height="2" rx="0" fill="#000" />
<circle cx="575" cy="877" r="12.1" fill="#a9a9a9" stroke="#5d5d5d" stroke-width="1.8"/>
<path d="M575.7,871.8 A5.8,5.8 0 0 0 568.7,877.5" fill="none" stroke="#000" stroke-width="2.2" stroke-linecap="round"/>
<path d="M574.3,882.2 A5.8,5.8 0 0 0 581.3,876.5" fill="none" stroke="#000" stroke-width="2.2" stroke-linecap="round"/>
<polygon points="565.5,876 571.5,876 568.5,880" fill="#000"/>
<polygon points="584.5,878 578.5,878 581.5,874" fill="#000"/>
<circle cx="607" cy="877" r="12.1" fill="#a9a9a9" stroke="#5d5d5d" stroke-width="1.8"/>
<path d="M600,870 H611 L614,873 V884 H600 Z" fill="#000" />
<rect x="604" y="872" width="6" height="4" rx="0" fill="#a9a9a9" />
<rect x="311.0" y="909.0" width="24" height="24" rx="0" fill="#f4b850" stroke="#555" stroke-width="2" />
<text x="177.5" y="959" font-family="Liberation Sans" font-size="18.5" font-weight="400" fill="#000" text-anchor="start" letter-spacing="0.22" >spread</text>
<path d="M188.95,1031.76 A33.9,33.9 0 1 1 222.85,1031.76" fill="none" stroke="#8ed6f8" stroke-width="4.1"/>
<line x1="209.29" y1="1008.52" x2="221.90" y2="1031.26" stroke="#2d2d2d" stroke-width="4.2" stroke-linecap="round"/>
<text x="178.6" y="1060" font-family="Liberation Sans" font-size="18.5" font-weight="400" fill="#000" text-anchor="start" letter-spacing="0.4" >100 %</text>
<rect x="255.0" y="943.0" width="79" height="24" rx="0" fill="#c6c6c6" stroke="#555555" stroke-width="2" />
<text x="264.3" y="962" font-family="Liberation Sans" font-size="18.5" font-weight="400" fill="#000" text-anchor="start" letter-spacing="0.44" >0.00 %</text>
<rect x="255.0" y="977.0" width="79" height="24" rx="0" fill="#c6c6c6" stroke="#555555" stroke-width="2" />
<rect x="256" y="978" width="19.25" height="22" rx="0" fill="#8ed6f8" />
<text x="264.1" y="996" font-family="Liberation Sans" font-size="18.5" font-weight="400" fill="#000" text-anchor="start" letter-spacing="0.48" >25.0 %</text>
<rect x="255.0" y="1011.0" width="79" height="24" rx="0" fill="#c6c6c6" stroke="#555555" stroke-width="2" />
<rect x="256" y="1012" width="38.5" height="22" rx="0" fill="#8ed6f8" />
<text x="264.3" y="1030" font-family="Liberation Sans" font-size="18.5" font-weight="400" fill="#000" text-anchor="start" letter-spacing="0.44" >50.0 %</text>
<rect x="255.0" y="1045.0" width="79" height="24" rx="0" fill="#c6c6c6" stroke="#555555" stroke-width="2" />
<rect x="256" y="1046" width="57.75" height="22" rx="0" fill="#8ed6f8" />
<text x="264.1" y="1064" font-family="Liberation Sans" font-size="18.5" font-weight="400" fill="#000" text-anchor="start" letter-spacing="0.48" >75.0 %</text>
<rect x="255.0" y="1079.0" width="79" height="24" rx="0" fill="#c6c6c6" stroke="#555555" stroke-width="2" />
<text x="264.3" y="1098" font-family="Liberation Sans" font-size="18.5" font-weight="400" fill="#000" text-anchor="start" letter-spacing="0.44" >0.00 %</text>
<rect x="255.0" y="1113.0" width="79" height="24" rx="0" fill="#c6c6c6" stroke="#555555" stroke-width="2" />
<rect x="256" y="1114" width="19.25" height="22" rx="0" fill="#8ed6f8" />
<text x="264.1" y="1132" font-family="Liberation Sans" font-size="18.5" font-weight="400" fill="#000" text-anchor="start" letter-spacing="0.48" >25.0 %</text>
<rect x="255.0" y="1149.0" width="79" height="24" rx="0" fill="#c6c6c6" stroke="#555555" stroke-width="2" />
<rect x="256" y="1150" width="38.5" height="22" rx="0" fill="#8ed6f8" />
<text x="264.3" y="1168" font-family="Liberation Sans" font-size="18.5" font-weight="400" fill="#000" text-anchor="start" letter-spacing="0.44" >50.0 %</text>
<rect x="255.0" y="1183.0" width="79" height="24" rx="0" fill="#c6c6c6" stroke="#555555" stroke-width="2" />
<rect x="256" y="1184" width="57.75" height="22" rx="0" fill="#8ed6f8" />
<text x="264.1" y="1202" font-family="Liberation Sans" font-size="18.5" font-weight="400" fill="#000" text-anchor="start" letter-spacing="0.48" >75.0 %</text>
<text x="210.5" y="1099" font-family="Liberation Sans" font-size="18.5" font-weight="400" fill="#000" text-anchor="start" letter-spacing="0.58" >split</text>
<path d="M194.00,1136.00 A18,18 0 0 1 177.09,1111.84" fill="none" stroke="#8ed6f8" stroke-width="4"/>
<path d="M180.01,1106.67 A18,18 0 0 1 212.00,1118.00" fill="none" stroke="#2d2d2d" stroke-width="4"/>
<line x1="194.00" y1="1118.00" x2="176.02" y2="1109.23" stroke="#2d2d2d" stroke-width="4.2" stroke-linecap="round"/>
<text x="204" y="1137" font-family="Liberation Sans" font-size="18.5" font-weight="400" fill="#000" text-anchor="middle" >4</text>
<text x="211" y="1163" font-family="Liberation Sans" font-size="19" font-weight="400" fill="#000" text-anchor="start" letter-spacing="-0.3" >+/-</text>
<path d="M194.00,1202.00 A18,18 0 0 1 178.41,1175.00" fill="none" stroke="#2d2d2d" stroke-width="4"/>
<path d="M185.55,1168.11 A18,18 0 0 1 212.00,1184.00" fill="none" stroke="#2d2d2d" stroke-width="4"/>
<line x1="194.00" y1="1184.00" x2="180.21" y2="1170.21" stroke="#2d2d2d" stroke-width="4.2" stroke-linecap="round"/>
<polygon points="170,1169 179,1162 179,1169" fill="#2d2d2d"/>
<text x="198.3" y="1203" font-family="Liberation Sans" font-size="18.5" font-weight="400" fill="#000" text-anchor="start" letter-spacing="-0.75" >0 %</text>
<rect x="348" y="902" width="267" height="318" rx="10" fill="#333333" />
<text x="357.8" y="926" font-family="Liberation Sans" font-size="18.5" font-weight="400" fill="#a6a6a6" text-anchor="start" letter-spacing="0.48" stroke="#a6a6a6" stroke-width="0.6" >mapping</text>
<text x="463.8" y="926" font-family="Liberation Sans" font-size="18.5" font-weight="400" fill="#a6a6a6" text-anchor="start" letter-spacing="0.6" stroke="#a6a6a6" stroke-width="0.6" >min</text>
<text x="543.8" y="926" font-family="Liberation Sans" font-size="18.5" font-weight="400" fill="#a6a6a6" text-anchor="start" letter-spacing="-0.2" stroke="#a6a6a6" stroke-width="0.6" >max</text>
<rect x="356" y="944" width="70" height="26" rx="0" fill="#f4b850" />
<text x="365.0" y="964" font-family="Liberation Sans" font-size="18.5" font-weight="400" fill="#111" text-anchor="start" letter-spacing="-0.2" >Phase</text>
<circle cx="443" cy="957" r="12.0" fill="none" stroke="#f4b850" stroke-width="2"/>
<text x="443" y="964" font-family="Liberation Sans" font-size="18" font-weight="400" fill="#f4b850" text-anchor="middle" stroke="#f4b850" stroke-width="0.6" >X</text>
<rect x="462" y="944" width="70" height="26" rx="0" fill="#262626" />
<rect x="536" y="944" width="70" height="26" rx="0" fill="#262626" />
<text x="465.3" y="964" font-family="Liberation Sans" font-size="18.5" font-weight="400" fill="#f4b850" text-anchor="start" letter-spacing="0.05" >0 %</text>
<text x="539.2" y="964" font-family="Liberation Sans" font-size="18.5" font-weight="400" fill="#f4b850" text-anchor="start" letter-spacing="0.45" >100 %</text>
<rect x="356" y="978" width="70" height="26" rx="0" fill="#f4b850" />
<text x="365.0" y="998" font-family="Liberation Sans" font-size="18.5" font-weight="400" fill="#111" text-anchor="start" letter-spacing="-0.2" >Phase</text>
<circle cx="443" cy="991" r="12.0" fill="none" stroke="#f4b850" stroke-width="2"/>
<text x="443" y="998" font-family="Liberation Sans" font-size="18" font-weight="400" fill="#f4b850" text-anchor="middle" stroke="#f4b850" stroke-width="0.6" >X</text>
<rect x="462" y="978" width="70" height="26" rx="0" fill="#262626" />
<rect x="536" y="978" width="70" height="26" rx="0" fill="#262626" />
<text x="465.3" y="998" font-family="Liberation Sans" font-size="18.5" font-weight="400" fill="#f4b850" text-anchor="start" letter-spacing="0.05" >0 %</text>
<text x="539.2" y="998" font-family="Liberation Sans" font-size="18.5" font-weight="400" fill="#f4b850" text-anchor="start" letter-spacing="0.45" >100 %</text>
<rect x="356" y="1012" width="70" height="26" rx="0" fill="#f4b850" />
<text x="365.0" y="1032" font-family="Liberation Sans" font-size="18.5" font-weight="400" fill="#111" text-anchor="start" letter-spacing="-0.2" >Phase</text>
<circle cx="443" cy="1025" r="12.0" fill="none" stroke="#f4b850" stroke-width="2"/>
<text x="443" y="1032" font-family="Liberation Sans" font-size="18" font-weight="400" fill="#f4b850" text-anchor="middle" stroke="#f4b850" stroke-width="0.6" >X</text>
<rect x="462" y="1012" width="70" height="26" rx="0" fill="#262626" />
<rect x="536" y="1012" width="70" height="26" rx="0" fill="#262626" />
<text x="465.3" y="1032" font-family="Liberation Sans" font-size="18.5" font-weight="400" fill="#f4b850" text-anchor="start" letter-spacing="0.05" >0 %</text>
<text x="539.2" y="1032" font-family="Liberation Sans" font-size="18.5" font-weight="400" fill="#f4b850" text-anchor="start" letter-spacing="0.45" >100 %</text>
<rect x="356" y="1046" width="70" height="26" rx="0" fill="#f4b850" />
<text x="365.0" y="1066" font-family="Liberation Sans" font-size="18.5" font-weight="400" fill="#111" text-anchor="start" letter-spacing="-0.2" >Phase</text>
<circle cx="443" cy="1059" r="12.0" fill="none" stroke="#f4b850" stroke-width="2"/>
<text x="443" y="1066" font-family="Liberation Sans" font-size="18" font-weight="400" fill="#f4b850" text-anchor="middle" stroke="#f4b850" stroke-width="0.6" >X</text>
<rect x="462" y="1046" width="70" height="26" rx="0" fill="#262626" />
<rect x="536" y="1046" width="70" height="26" rx="0" fill="#262626" />
<text x="465.3" y="1066" font-family="Liberation Sans" font-size="18.5" font-weight="400" fill="#f4b850" text-anchor="start" letter-spacing="0.05" >0 %</text>
<text x="539.2" y="1066" font-family="Liberation Sans" font-size="18.5" font-weight="400" fill="#f4b850" text-anchor="start" letter-spacing="0.45" >100 %</text>
<rect x="356" y="1080" width="70" height="26" rx="0" fill="#f4b850" />
<text x="365.0" y="1100" font-family="Liberation Sans" font-size="18.5" font-weight="400" fill="#111" text-anchor="start" letter-spacing="-0.2" >Phase</text>
<circle cx="443" cy="1093" r="12.0" fill="none" stroke="#f4b850" stroke-width="2"/>
<text x="443" y="1100" font-family="Liberation Sans" font-size="18" font-weight="400" fill="#f4b850" text-anchor="middle" stroke="#f4b850" stroke-width="0.6" >X</text>
<rect x="462" y="1080" width="70" height="26" rx="0" fill="#262626" />
<rect x="536" y="1080" width="70" height="26" rx="0" fill="#262626" />
<text x="465.3" y="1100" font-family="Liberation Sans" font-size="18.5" font-weight="400" fill="#f4b850" text-anchor="start" letter-spacing="0.05" >0 %</text>
<text x="539.2" y="1100" font-family="Liberation Sans" font-size="18.5" font-weight="400" fill="#f4b850" text-anchor="start" letter-spacing="0.45" >100 %</text>
<rect x="356" y="1114" width="70" height="26" rx="0" fill="#f4b850" />
<text x="365.0" y="1134" font-family="Liberation Sans" font-size="18.5" font-weight="400" fill="#111" text-anchor="start" letter-spacing="-0.2" >Phase</text>
<circle cx="443" cy="1127" r="12.0" fill="none" stroke="#f4b850" stroke-width="2"/>
<text x="443" y="1134" font-family="Liberation Sans" font-size="18" font-weight="400" fill="#f4b850" text-anchor="middle" stroke="#f4b850" stroke-width="0.6" >X</text>
<rect x="462" y="1114" width="70" height="26" rx="0" fill="#262626" />
<rect x="536" y="1114" width="70" height="26" rx="0" fill="#262626" />
<text x="465.3" y="1134" font-family="Liberation Sans" font-size="18.5" font-weight="400" fill="#f4b850" text-anchor="start" letter-spacing="0.05" >0 %</text>
<text x="539.2" y="1134" font-family="Liberation Sans" font-size="18.5" font-weight="400" fill="#f4b850" text-anchor="start" letter-spacing="0.45" >100 %</text>
<rect x="356" y="1148" width="70" height="26" rx="0" fill="#f4b850" />
<text x="365.0" y="1168" font-family="Liberation Sans" font-size="18.5" font-weight="400" fill="#111" text-anchor="start" letter-spacing="-0.2" >Phase</text>
<circle cx="443" cy="1161" r="12.0" fill="none" stroke="#f4b850" stroke-width="2"/>
<text x="443" y="1168" font-family="Liberation Sans" font-size="18" font-weight="400" fill="#f4b850" text-anchor="middle" stroke="#f4b850" stroke-width="0.6" >X</text>
<rect x="462" y="1148" width="70" height="26" rx="0" fill="#262626" />
<rect x="536" y="1148" width="70" height="26" rx="0" fill="#262626" />
<text x="465.3" y="1168" font-family="Liberation Sans" font-size="18.5" font-weight="400" fill="#f4b850" text-anchor="start" letter-spacing="0.05" >0 %</text>
<text x="539.2" y="1168" font-family="Liberation Sans" font-size="18.5" font-weight="400" fill="#f4b850" text-anchor="start" letter-spacing="0.45" >100 %</text>
<rect x="356" y="1182" width="70" height="26" rx="0" fill="#f4b850" />
<text x="365.0" y="1202" font-family="Liberation Sans" font-size="18.5" font-weight="400" fill="#111" text-anchor="start" letter-spacing="-0.2" >Phase</text>
<circle cx="443" cy="1195" r="12.0" fill="none" stroke="#f4b850" stroke-width="2"/>
<text x="443" y="1202" font-family="Liberation Sans" font-size="18" font-weight="400" fill="#f4b850" text-anchor="middle" stroke="#f4b850" stroke-width="0.6" >X</text>
<rect x="462" y="1182" width="70" height="26" rx="0" fill="#262626" />
<rect x="536" y="1182" width="70" height="26" rx="0" fill="#262626" />
<text x="465.3" y="1202" font-family="Liberation Sans" font-size="18.5" font-weight="400" fill="#f4b850" text-anchor="start" letter-spacing="0.05" >0 %</text>
<text x="539.2" y="1202" font-family="Liberation Sans" font-size="18.5" font-weight="400" fill="#f4b850" text-anchor="start" letter-spacing="0.45" >100 %</text>
<circle cx="636" cy="1010.0" r="2.3" fill="#2e2e2e"/>
<circle cx="636" cy="1018.4" r="2.3" fill="#2e2e2e"/>
<circle cx="636" cy="1026.8" r="2.3" fill="#2e2e2e"/>
<circle cx="636" cy="1035.2" r="2.3" fill="#2e2e2e"/>
<circle cx="636" cy="1043.6" r="2.3" fill="#2e2e2e"/>
<circle cx="636" cy="1052.0" r="2.3" fill="#2e2e2e"/>
<circle cx="636" cy="1060.4" r="2.3" fill="#2e2e2e"/>
<circle cx="636" cy="1068.8" r="2.3" fill="#2e2e2e"/>
<circle cx="636" cy="1077.2" r="2.3" fill="#2e2e2e"/>
<circle cx="636" cy="1085.6" r="2.3" fill="#2e2e2e"/>
<text x="683.4" y="1028" font-family="Liberation Sans" font-size="20" font-weight="400" fill="#000" text-anchor="start" letter-spacing="1.6" >Drop</text>
<text x="652.2" y="1054" font-family="Liberation Sans" font-size="20" font-weight="400" fill="#000" text-anchor="start" letter-spacing="1.6" >Instrument</text>
<text x="684.1" y="1080" font-family="Liberation Sans" font-size="20" font-weight="400" fill="#000" text-anchor="start" letter-spacing="1.13" >Here</text>
<path d="M768,894 V870 Q768,860 778,860 H1926 Q1936,860 1936,870 V894 Z" fill="#a9a9a9" />
<path d="M768,894 H1936 V1225 Q1936,1235 1926,1235 H778 Q768,1235 768,1225 Z" fill="#8a8a8a" />
<circle cx="787" cy="877" r="12.0" fill="#f4b850" stroke="#555" stroke-width="2"/>
<text x="807.9" y="884" font-family="Liberation Sans" font-size="19.5" font-weight="700" fill="#000" text-anchor="start" letter-spacing="0.12" >ESX8CV octLFO</text>
<circle cx="1852.5" cy="877" r="12.1" fill="#a9a9a9" stroke="#5d5d5d" stroke-width="1.8"/>
<rect x="1846.45" y="872.95" width="12.1" height="8.1" rx="0" fill="none" stroke="#000" stroke-width="1.9" />
<rect x="1847.5" y="870" width="2.0" height="2" rx="0" fill="#000" />
<rect x="1855.5" y="870" width="2.0" height="2" rx="0" fill="#000" />
<rect x="1847.5" y="882" width="2.0" height="2" rx="0" fill="#000" />
<rect x="1855.5" y="882" width="2.0" height="2" rx="0" fill="#000" />
<circle cx="1885" cy="877" r="12.1" fill="#a9a9a9" stroke="#5d5d5d" stroke-width="1.8"/>
<path d="M1885.7,871.8 A5.8,5.8 0 0 0 1878.7,877.5" fill="none" stroke="#000" stroke-width="2.2" stroke-linecap="round"/>
<path d="M1884.3,882.2 A5.8,5.8 0 0 0 1891.3,876.5" fill="none" stroke="#000" stroke-width="2.2" stroke-linecap="round"/>
<polygon points="1875.5,876 1881.5,876 1878.5,880" fill="#000"/>
<polygon points="1894.5,878 1888.5,878 1891.5,874" fill="#000"/>
<circle cx="1917" cy="877" r="12.1" fill="#a9a9a9" stroke="#5d5d5d" stroke-width="1.8"/>
<path d="M1910,870 H1921 L1924,873 V884 H1910 Z" fill="#000" />
<rect x="1914" y="872" width="6" height="4" rx="0" fill="#a9a9a9" />
<rect x="890" y="900" width="2" height="326" rx="0" fill="#5e5e5e" />
<text x="789.1" y="920" font-family="Liberation Sans" font-size="18.5" font-weight="400" fill="#000" text-anchor="start" letter-spacing="0.33" >Rate</text>
<rect x="845.0" y="905.0" width="36" height="24" rx="0" fill="#f4b850" stroke="#555555" stroke-width="2" />
<text x="851.8" y="924" font-family="Liberation Sans" font-size="18.5" font-weight="400" fill="#111" text-anchor="start" letter-spacing="-0.9" >Hz</text>
<rect x="845.0" y="937.0" width="36" height="24" rx="0" fill="#aaaaaa" stroke="#555555" stroke-width="2" />
<text x="848.2" y="956" font-family="Liberation Sans" font-size="18.5" font-weight="400" fill="#111" text-anchor="start" letter-spacing="-0.95" >Syn</text>
<circle cx="863" cy="978.5" r="11.75" fill="#aaaaaa" stroke="#555" stroke-width="1.7"/>
<text x="863" y="985.5" font-family="Liberation Sans" font-size="18.5" font-weight="400" fill="#111" text-anchor="middle" >R</text>
<path d="M787.99,942.45 A23.6,23.6 0 1 1 821.00,973.24" fill="none" stroke="#2d2d2d" stroke-width="3.9"/>
<path d="M797.40,973.24 A23.6,23.6 0 0 1 786.20,947.49" fill="none" stroke="#8ed6f8" stroke-width="3.9"/>
<line x1="809.20" y1="952.80" x2="785.09" y2="946.20" stroke="#2d2d2d" stroke-width="4.2" stroke-linecap="round"/>
<text x="776.6" y="994" font-family="Liberation Sans" font-size="18.5" font-weight="400" fill="#000" text-anchor="start" letter-spacing="0.42" >1.00 Hz</text>
<rect x="776" y="1012" width="104" height="26" rx="0" fill="#262626" />
<text x="779.2" y="1032" font-family="Liberation Sans" font-size="19" font-weight="400" fill="#f4b850" text-anchor="start" letter-spacing="-0.4" stroke="#f4b850" stroke-width="0.6" >Sine</text>
<polygon points="861.5,1020 875,1020 868.25,1030" fill="#f4b850"/>
<text x="823.5" y="1060" font-family="Liberation Sans" font-size="18.5" font-weight="400" fill="#000" text-anchor="start" letter-spacing="-0.3" >Phase</text>
<rect x="777.0" y="1067.0" width="24" height="24" rx="0" fill="#f4b850" stroke="#555555" stroke-width="2" />
<text x="789" y="1086" font-family="Liberation Sans" font-size="18.5" font-weight="700" fill="#111" text-anchor="middle" >M</text>
<rect x="811.0" y="1067.0" width="68" height="24" rx="0" fill="#8a8a8a" stroke="#555555" stroke-width="2" />
<text x="829.0" y="1086" font-family="Liberation Sans" font-size="18.5" font-weight="400" fill="#000" text-anchor="start" letter-spacing="0.05" >0 %</text>
<text x="823.5" y="1120" font-family="Liberation Sans" font-size="18.5" font-weight="400" fill="#000" text-anchor="start" letter-spacing="0.75" >Depth</text>
<path d="M806.00,1152.00 A18,18 0 1 1 824.00,1134.00" fill="none" stroke="#8ed6f8" stroke-width="4.2"/>
<line x1="806.50" y1="1134.00" x2="824.20" y2="1134.00" stroke="#2d2d2d" stroke-width="4.2" stroke-linecap="round"/>
<text x="809.6" y="1153" font-family="Liberation Sans" font-size="18.5" font-weight="400" fill="#000" text-anchor="start" letter-spacing="0.47" >100 %</text>
<text x="824.2" y="1187" font-family="Liberation Sans" font-size="18.5" font-weight="400" fill="#000" text-anchor="start" letter-spacing="0.92" >Offset</text>
<path d="M806.00,1218.00 A18,18 0 0 1 790.82,1190.33" fill="none" stroke="#2d2d2d" stroke-width="4.2"/>
<path d="M796.89,1184.47 A18,18 0 0 1 824.00,1200.00" fill="none" stroke="#2d2d2d" stroke-width="4.2"/>
<line x1="806.00" y1="1200.00" x2="792.21" y2="1186.21" stroke="#2d2d2d" stroke-width="4.2" stroke-linecap="round"/>
<polygon points="782,1184.6 791,1178.4 791,1184.6" fill="#2d2d2d"/>
<text x="809.9" y="1219.5" font-family="Liberation Sans" font-size="18.5" font-weight="400" fill="#000" text-anchor="start" letter-spacing="-0.65" >0 %</text>
<rect x="1014" y="900" width="2" height="326" rx="0" fill="#5e5e5e" />
<text x="913.1" y="920" font-family="Liberation Sans" font-size="18.5" font-weight="400" fill="#000" text-anchor="start" letter-spacing="0.33" >Rate</text>
<rect x="969.0" y="905.0" width="36" height="24" rx="0" fill="#f4b850" stroke="#555555" stroke-width="2" />
<text x="975.8" y="924" font-family="Liberation Sans" font-size="18.5" font-weight="400" fill="#111" text-anchor="start" letter-spacing="-0.9" >Hz</text>
<rect x="969.0" y="937.0" width="36" height="24" rx="0" fill="#aaaaaa" stroke="#555555" stroke-width="2" />
<text x="972.2" y="956" font-family="Liberation Sans" font-size="18.5" font-weight="400" fill="#111" text-anchor="start" letter-spacing="-0.95" >Syn</text>
<circle cx="987" cy="978.5" r="11.75" fill="#aaaaaa" stroke="#555" stroke-width="1.7"/>
<text x="987" y="985.5" font-family="Liberation Sans" font-size="18.5" font-weight="400" fill="#111" text-anchor="middle" >R</text>
<path d="M911.99,942.45 A23.6,23.6 0 1 1 945.00,973.24" fill="none" stroke="#2d2d2d" stroke-width="3.9"/>
<path d="M921.40,973.24 A23.6,23.6 0 0 1 910.20,947.49" fill="none" stroke="#8ed6f8" stroke-width="3.9"/>
<line x1="933.20" y1="952.80" x2="909.09" y2="946.20" stroke="#2d2d2d" stroke-width="4.2" stroke-linecap="round"/>
<text x="900.6" y="994" font-family="Liberation Sans" font-size="18.5" font-weight="400" fill="#000" text-anchor="start" letter-spacing="0.42" >1.00 Hz</text>
<rect x="900" y="1012" width="104" height="26" rx="0" fill="#262626" />
<text x="903.2" y="1032" font-family="Liberation Sans" font-size="19" font-weight="400" fill="#f4b850" text-anchor="start" letter-spacing="-0.4" stroke="#f4b850" stroke-width="0.6" >Sine</text>
<polygon points="985.5,1020 999,1020 992.25,1030" fill="#f4b850"/>
<text x="947.5" y="1060" font-family="Liberation Sans" font-size="18.5" font-weight="400" fill="#000" text-anchor="start" letter-spacing="-0.3" >Phase</text>
<rect x="901.0" y="1067.0" width="24" height="24" rx="0" fill="#f4b850" stroke="#555555" stroke-width="2" />
<text x="913" y="1086" font-family="Liberation Sans" font-size="18.5" font-weight="700" fill="#111" text-anchor="middle" >M</text>
<rect x="935.0" y="1067.0" width="68" height="24" rx="0" fill="#8a8a8a" stroke="#555555" stroke-width="2" />
<text x="947.65" y="1086" font-family="Liberation Sans" font-size="18.5" font-weight="400" fill="#000" text-anchor="start" letter-spacing="0.1" >25 %</text>
<text x="947.5" y="1120" font-family="Liberation Sans" font-size="18.5" font-weight="400" fill="#000" text-anchor="start" letter-spacing="0.75" >Depth</text>
<path d="M930.00,1152.00 A18,18 0 1 1 948.00,1134.00" fill="none" stroke="#8ed6f8" stroke-width="4.2"/>
<line x1="930.50" y1="1134.00" x2="948.20" y2="1134.00" stroke="#2d2d2d" stroke-width="4.2" stroke-linecap="round"/>
<text x="933.6" y="1153" font-family="Liberation Sans" font-size="18.5" font-weight="400" fill="#000" text-anchor="start" letter-spacing="0.47" >100 %</text>
<text x="948.2" y="1187" font-family="Liberation Sans" font-size="18.5" font-weight="400" fill="#000" text-anchor="start" letter-spacing="0.92" >Offset</text>
<path d="M930.00,1218.00 A18,18 0 0 1 914.82,1190.33" fill="none" stroke="#2d2d2d" stroke-width="4.2"/>
<path d="M920.89,1184.47 A18,18 0 0 1 948.00,1200.00" fill="none" stroke="#2d2d2d" stroke-width="4.2"/>
<line x1="930.00" y1="1200.00" x2="916.21" y2="1186.21" stroke="#2d2d2d" stroke-width="4.2" stroke-linecap="round"/>
<polygon points="906,1184.6 915,1178.4 915,1184.6" fill="#2d2d2d"/>
<text x="933.9" y="1219.5" font-family="Liberation Sans" font-size="18.5" font-weight="400" fill="#000" text-anchor="start" letter-spacing="-0.65" >0 %</text>
<rect x="1138" y="900" width="2" height="326" rx="0" fill="#5e5e5e" />
<text x="1037.1" y="920" font-family="Liberation Sans" font-size="18.5" font-weight="400" fill="#000" text-anchor="start" letter-spacing="0.33" >Rate</text>
<rect x="1093.0" y="905.0" width="36" height="24" rx="0" fill="#f4b850" stroke="#555555" stroke-width="2" />
<text x="1099.8" y="924" font-family="Liberation Sans" font-size="18.5" font-weight="400" fill="#111" text-anchor="start" letter-spacing="-0.9" >Hz</text>
<rect x="1093.0" y="937.0" width="36" height="24" rx="0" fill="#aaaaaa" stroke="#555555" stroke-width="2" />
<text x="1096.2" y="956" font-family="Liberation Sans" font-size="18.5" font-weight="400" fill="#111" text-anchor="start" letter-spacing="-0.95" >Syn</text>
<circle cx="1111" cy="978.5" r="11.75" fill="#aaaaaa" stroke="#555" stroke-width="1.7"/>
<text x="1111" y="985.5" font-family="Liberation Sans" font-size="18.5" font-weight="400" fill="#111" text-anchor="middle" >R</text>
<path d="M1035.99,942.45 A23.6,23.6 0 1 1 1069.00,973.24" fill="none" stroke="#2d2d2d" stroke-width="3.9"/>
<path d="M1045.40,973.24 A23.6,23.6 0 0 1 1034.20,947.49" fill="none" stroke="#8ed6f8" stroke-width="3.9"/>
<line x1="1057.20" y1="952.80" x2="1033.09" y2="946.20" stroke="#2d2d2d" stroke-width="4.2" stroke-linecap="round"/>
<text x="1024.6" y="994" font-family="Liberation Sans" font-size="18.5" font-weight="400" fill="#000" text-anchor="start" letter-spacing="0.42" >1.00 Hz</text>
<rect x="1024" y="1012" width="104" height="26" rx="0" fill="#262626" />
<text x="1027.2" y="1032" font-family="Liberation Sans" font-size="19" font-weight="400" fill="#f4b850" text-anchor="start" letter-spacing="-0.4" stroke="#f4b850" stroke-width="0.6" >Sine</text>
<polygon points="1109.5,1020 1123,1020 1116.25,1030" fill="#f4b850"/>
<text x="1071.5" y="1060" font-family="Liberation Sans" font-size="18.5" font-weight="400" fill="#000" text-anchor="start" letter-spacing="-0.3" >Phase</text>
<rect x="1025.0" y="1067.0" width="24" height="24" rx="0" fill="#f4b850" stroke="#555555" stroke-width="2" />
<text x="1037" y="1086" font-family="Liberation Sans" font-size="18.5" font-weight="700" fill="#111" text-anchor="middle" >M</text>
<rect x="1059.0" y="1067.0" width="68" height="24" rx="0" fill="#8a8a8a" stroke="#555555" stroke-width="2" />
<text x="1071.85" y="1086" font-family="Liberation Sans" font-size="18.5" font-weight="400" fill="#000" text-anchor="start" letter-spacing="0.03" >50 %</text>
<text x="1071.5" y="1120" font-family="Liberation Sans" font-size="18.5" font-weight="400" fill="#000" text-anchor="start" letter-spacing="0.75" >Depth</text>
<path d="M1054.00,1152.00 A18,18 0 1 1 1072.00,1134.00" fill="none" stroke="#8ed6f8" stroke-width="4.2"/>
<line x1="1054.50" y1="1134.00" x2="1072.20" y2="1134.00" stroke="#2d2d2d" stroke-width="4.2" stroke-linecap="round"/>
<text x="1057.6" y="1153" font-family="Liberation Sans" font-size="18.5" font-weight="400" fill="#000" text-anchor="start" letter-spacing="0.47" >100 %</text>
<text x="1072.2" y="1187" font-family="Liberation Sans" font-size="18.5" font-weight="400" fill="#000" text-anchor="start" letter-spacing="0.92" >Offset</text>
<path d="M1054.00,1218.00 A18,18 0 0 1 1038.82,1190.33" fill="none" stroke="#2d2d2d" stroke-width="4.2"/>
<path d="M1044.89,1184.47 A18,18 0 0 1 1072.00,1200.00" fill="none" stroke="#2d2d2d" stroke-width="4.2"/>
<line x1="1054.00" y1="1200.00" x2="1040.21" y2="1186.21" stroke="#2d2d2d" stroke-width="4.2" stroke-linecap="round"/>
<polygon points="1030,1184.6 1039,1178.4 1039,1184.6" fill="#2d2d2d"/>
<text x="1057.9" y="1219.5" font-family="Liberation Sans" font-size="18.5" font-weight="400" fill="#000" text-anchor="start" letter-spacing="-0.65" >0 %</text>
<rect x="1262" y="900" width="2" height="326" rx="0" fill="#5e5e5e" />
<text x="1161.1" y="920" font-family="Liberation Sans" font-size="18.5" font-weight="400" fill="#000" text-anchor="start" letter-spacing="0.33" >Rate</text>
<rect x="1217.0" y="905.0" width="36" height="24" rx="0" fill="#f4b850" stroke="#555555" stroke-width="2" />
<text x="1223.8" y="924" font-family="Liberation Sans" font-size="18.5" font-weight="400" fill="#111" text-anchor="start" letter-spacing="-0.9" >Hz</text>
<rect x="1217.0" y="937.0" width="36" height="24" rx="0" fill="#aaaaaa" stroke="#555555" stroke-width="2" />
<text x="1220.2" y="956" font-family="Liberation Sans" font-size="18.5" font-weight="400" fill="#111" text-anchor="start" letter-spacing="-0.95" >Syn</text>
<circle cx="1235" cy="978.5" r="11.75" fill="#aaaaaa" stroke="#555" stroke-width="1.7"/>
<text x="1235" y="985.5" font-family="Liberation Sans" font-size="18.5" font-weight="400" fill="#111" text-anchor="middle" >R</text>
<path d="M1159.99,942.45 A23.6,23.6 0 1 1 1193.00,973.24" fill="none" stroke="#2d2d2d" stroke-width="3.9"/>
<path d="M1169.40,973.24 A23.6,23.6 0 0 1 1158.20,947.49" fill="none" stroke="#8ed6f8" stroke-width="3.9"/>
<line x1="1181.20" y1="952.80" x2="1157.09" y2="946.20" stroke="#2d2d2d" stroke-width="4.2" stroke-linecap="round"/>
<text x="1148.6" y="994" font-family="Liberation Sans" font-size="18.5" font-weight="400" fill="#000" text-anchor="start" letter-spacing="0.42" >1.00 Hz</text>
<rect x="1148" y="1012" width="104" height="26" rx="0" fill="#262626" />
<text x="1151.2" y="1032" font-family="Liberation Sans" font-size="19" font-weight="400" fill="#f4b850" text-anchor="start" letter-spacing="-0.4" stroke="#f4b850" stroke-width="0.6" >Sine</text>
<polygon points="1233.5,1020 1247,1020 1240.25,1030" fill="#f4b850"/>
<text x="1195.5" y="1060" font-family="Liberation Sans" font-size="18.5" font-weight="400" fill="#000" text-anchor="start" letter-spacing="-0.3" >Phase</text>
<rect x="1149.0" y="1067.0" width="24" height="24" rx="0" fill="#f4b850" stroke="#555555" stroke-width="2" />
<text x="1161" y="1086" font-family="Liberation Sans" font-size="18.5" font-weight="700" fill="#111" text-anchor="middle" >M</text>
<rect x="1183.0" y="1067.0" width="68" height="24" rx="0" fill="#8a8a8a" stroke="#555555" stroke-width="2" />
<text x="1195.65" y="1086" font-family="Liberation Sans" font-size="18.5" font-weight="400" fill="#000" text-anchor="start" letter-spacing="0.1" >75 %</text>
<text x="1195.5" y="1120" font-family="Liberation Sans" font-size="18.5" font-weight="400" fill="#000" text-anchor="start" letter-spacing="0.75" >Depth</text>
<path d="M1178.00,1152.00 A18,18 0 1 1 1196.00,1134.00" fill="none" stroke="#8ed6f8" stroke-width="4.2"/>
<line x1="1178.50" y1="1134.00" x2="1196.20" y2="1134.00" stroke="#2d2d2d" stroke-width="4.2" stroke-linecap="round"/>
<text x="1181.6" y="1153" font-family="Liberation Sans" font-size="18.5" font-weight="400" fill="#000" text-anchor="start" letter-spacing="0.47" >100 %</text>
<text x="1196.2" y="1187" font-family="Liberation Sans" font-size="18.5" font-weight="400" fill="#000" text-anchor="start" letter-spacing="0.92" >Offset</text>
<path d="M1178.00,1218.00 A18,18 0 0 1 1162.82,1190.33" fill="none" stroke="#2d2d2d" stroke-width="4.2"/>
<path d="M1168.89,1184.47 A18,18 0 0 1 1196.00,1200.00" fill="none" stroke="#2d2d2d" stroke-width="4.2"/>
<line x1="1178.00" y1="1200.00" x2="1164.21" y2="1186.21" stroke="#2d2d2d" stroke-width="4.2" stroke-linecap="round"/>
<polygon points="1154,1184.6 1163,1178.4 1163,1184.6" fill="#2d2d2d"/>
<text x="1181.9" y="1219.5" font-family="Liberation Sans" font-size="18.5" font-weight="400" fill="#000" text-anchor="start" letter-spacing="-0.65" >0 %</text>
<rect x="1386" y="900" width="2" height="326" rx="0" fill="#5e5e5e" />
<text x="1285.1" y="920" font-family="Liberation Sans" font-size="18.5" font-weight="400" fill="#000" text-anchor="start" letter-spacing="0.33" >Rate</text>
<rect x="1341.0" y="905.0" width="36" height="24" rx="0" fill="#f4b850" stroke="#555555" stroke-width="2" />
<text x="1347.8" y="924" font-family="Liberation Sans" font-size="18.5" font-weight="400" fill="#111" text-anchor="start" letter-spacing="-0.9" >Hz</text>
<rect x="1341.0" y="937.0" width="36" height="24" rx="0" fill="#aaaaaa" stroke="#555555" stroke-width="2" />
<text x="1344.2" y="956" font-family="Liberation Sans" font-size="18.5" font-weight="400" fill="#111" text-anchor="start" letter-spacing="-0.95" >Syn</text>
<circle cx="1359" cy="978.5" r="11.75" fill="#aaaaaa" stroke="#555" stroke-width="1.7"/>
<text x="1359" y="985.5" font-family="Liberation Sans" font-size="18.5" font-weight="400" fill="#111" text-anchor="middle" >R</text>
<path d="M1283.99,942.45 A23.6,23.6 0 1 1 1317.00,973.24" fill="none" stroke="#2d2d2d" stroke-width="3.9"/>
<path d="M1293.40,973.24 A23.6,23.6 0 0 1 1282.20,947.49" fill="none" stroke="#8ed6f8" stroke-width="3.9"/>
<line x1="1305.20" y1="952.80" x2="1281.09" y2="946.20" stroke="#2d2d2d" stroke-width="4.2" stroke-linecap="round"/>
<text x="1272.6" y="994" font-family="Liberation Sans" font-size="18.5" font-weight="400" fill="#000" text-anchor="start" letter-spacing="0.42" >1.00 Hz</text>
<rect x="1272" y="1012" width="104" height="26" rx="0" fill="#262626" />
<text x="1274.5" y="1032" font-family="Liberation Sans" font-size="19" font-weight="400" fill="#f4b850" text-anchor="start" letter-spacing="0.3" stroke="#f4b850" stroke-width="0.6" >Down</text>
<polygon points="1357.5,1020 1371,1020 1364.25,1030" fill="#f4b850"/>
<text x="1319.5" y="1060" font-family="Liberation Sans" font-size="18.5" font-weight="400" fill="#000" text-anchor="start" letter-spacing="-0.3" >Phase</text>
<rect x="1273.0" y="1067.0" width="24" height="24" rx="0" fill="#f4b850" stroke="#555555" stroke-width="2" />
<text x="1285" y="1086" font-family="Liberation Sans" font-size="18.5" font-weight="700" fill="#111" text-anchor="middle" >M</text>
<rect x="1307.0" y="1067.0" width="68" height="24" rx="0" fill="#8a8a8a" stroke="#555555" stroke-width="2" />
<text x="1325.0" y="1086" font-family="Liberation Sans" font-size="18.5" font-weight="400" fill="#000" text-anchor="start" letter-spacing="0.05" >0 %</text>
<text x="1319.5" y="1120" font-family="Liberation Sans" font-size="18.5" font-weight="400" fill="#000" text-anchor="start" letter-spacing="0.75" >Depth</text>
<path d="M1302.00,1152.00 A18,18 0 1 1 1320.00,1134.00" fill="none" stroke="#8ed6f8" stroke-width="4.2"/>
<line x1="1302.50" y1="1134.00" x2="1320.20" y2="1134.00" stroke="#2d2d2d" stroke-width="4.2" stroke-linecap="round"/>
<text x="1305.6" y="1153" font-family="Liberation Sans" font-size="18.5" font-weight="400" fill="#000" text-anchor="start" letter-spacing="0.47" >100 %</text>
<text x="1320.2" y="1187" font-family="Liberation Sans" font-size="18.5" font-weight="400" fill="#000" text-anchor="start" letter-spacing="0.92" >Offset</text>
<path d="M1302.00,1218.00 A18,18 0 0 1 1286.82,1190.33" fill="none" stroke="#2d2d2d" stroke-width="4.2"/>
<path d="M1292.89,1184.47 A18,18 0 0 1 1320.00,1200.00" fill="none" stroke="#2d2d2d" stroke-width="4.2"/>
<line x1="1302.00" y1="1200.00" x2="1288.21" y2="1186.21" stroke="#2d2d2d" stroke-width="4.2" stroke-linecap="round"/>
<polygon points="1278,1184.6 1287,1178.4 1287,1184.6" fill="#2d2d2d"/>
<text x="1305.9" y="1219.5" font-family="Liberation Sans" font-size="18.5" font-weight="400" fill="#000" text-anchor="start" letter-spacing="-0.65" >0 %</text>
<rect x="1510" y="900" width="2" height="326" rx="0" fill="#5e5e5e" />
<text x="1409.1" y="920" font-family="Liberation Sans" font-size="18.5" font-weight="400" fill="#000" text-anchor="start" letter-spacing="0.33" >Rate</text>
<rect x="1465.0" y="905.0" width="36" height="24" rx="0" fill="#f4b850" stroke="#555555" stroke-width="2" />
<text x="1471.8" y="924" font-family="Liberation Sans" font-size="18.5" font-weight="400" fill="#111" text-anchor="start" letter-spacing="-0.9" >Hz</text>
<rect x="1465.0" y="937.0" width="36" height="24" rx="0" fill="#aaaaaa" stroke="#555555" stroke-width="2" />
<text x="1468.2" y="956" font-family="Liberation Sans" font-size="18.5" font-weight="400" fill="#111" text-anchor="start" letter-spacing="-0.95" >Syn</text>
<circle cx="1483" cy="978.5" r="11.75" fill="#aaaaaa" stroke="#555" stroke-width="1.7"/>
<text x="1483" y="985.5" font-family="Liberation Sans" font-size="18.5" font-weight="400" fill="#111" text-anchor="middle" >R</text>
<path d="M1407.99,942.45 A23.6,23.6 0 1 1 1441.00,973.24" fill="none" stroke="#2d2d2d" stroke-width="3.9"/>
<path d="M1417.40,973.24 A23.6,23.6 0 0 1 1406.20,947.49" fill="none" stroke="#8ed6f8" stroke-width="3.9"/>
<line x1="1429.20" y1="952.80" x2="1405.09" y2="946.20" stroke="#2d2d2d" stroke-width="4.2" stroke-linecap="round"/>
<text x="1396.6" y="994" font-family="Liberation Sans" font-size="18.5" font-weight="400" fill="#000" text-anchor="start" letter-spacing="0.42" >1.00 Hz</text>
<rect x="1396" y="1012" width="104" height="26" rx="0" fill="#262626" />
<text x="1398.5" y="1032" font-family="Liberation Sans" font-size="19" font-weight="400" fill="#f4b850" text-anchor="start" letter-spacing="0.3" stroke="#f4b850" stroke-width="0.6" >Down</text>
<polygon points="1481.5,1020 1495,1020 1488.25,1030" fill="#f4b850"/>
<text x="1443.5" y="1060" font-family="Liberation Sans" font-size="18.5" font-weight="400" fill="#000" text-anchor="start" letter-spacing="-0.3" >Phase</text>
<rect x="1397.0" y="1067.0" width="24" height="24" rx="0" fill="#f4b850" stroke="#555555" stroke-width="2" />
<text x="1409" y="1086" font-family="Liberation Sans" font-size="18.5" font-weight="700" fill="#111" text-anchor="middle" >M</text>
<rect x="1431.0" y="1067.0" width="68" height="24" rx="0" fill="#8a8a8a" stroke="#555555" stroke-width="2" />
<text x="1443.65" y="1086" font-family="Liberation Sans" font-size="18.5" font-weight="400" fill="#000" text-anchor="start" letter-spacing="0.1" >25 %</text>
<text x="1443.5" y="1120" font-family="Liberation Sans" font-size="18.5" font-weight="400" fill="#000" text-anchor="start" letter-spacing="0.75" >Depth</text>
<path d="M1426.00,1152.00 A18,18 0 1 1 1444.00,1134.00" fill="none" stroke="#8ed6f8" stroke-width="4.2"/>
<line x1="1426.50" y1="1134.00" x2="1444.20" y2="1134.00" stroke="#2d2d2d" stroke-width="4.2" stroke-linecap="round"/>
<text x="1429.6" y="1153" font-family="Liberation Sans" font-size="18.5" font-weight="400" fill="#000" text-anchor="start" letter-spacing="0.47" >100 %</text>
<text x="1444.2" y="1187" font-family="Liberation Sans" font-size="18.5" font-weight="400" fill="#000" text-anchor="start" letter-spacing="0.92" >Offset</text>
<path d="M1426.00,1218.00 A18,18 0 0 1 1410.82,1190.33" fill="none" stroke="#2d2d2d" stroke-width="4.2"/>
<path d="M1416.89,1184.47 A18,18 0 0 1 1444.00,1200.00" fill="none" stroke="#2d2d2d" stroke-width="4.2"/>
<line x1="1426.00" y1="1200.00" x2="1412.21" y2="1186.21" stroke="#2d2d2d" stroke-width="4.2" stroke-linecap="round"/>
<polygon points="1402,1184.6 1411,1178.4 1411,1184.6" fill="#2d2d2d"/>
<text x="1429.9" y="1219.5" font-family="Liberation Sans" font-size="18.5" font-weight="400" fill="#000" text-anchor="start" letter-spacing="-0.65" >0 %</text>
<rect x="1634" y="900" width="2" height="326" rx="0" fill="#5e5e5e" />
<text x="1533.1" y="920" font-family="Liberation Sans" font-size="18.5" font-weight="400" fill="#000" text-anchor="start" letter-spacing="0.33" >Rate</text>
<rect x="1589.0" y="905.0" width="36" height="24" rx="0" fill="#f4b850" stroke="#555555" stroke-width="2" />
<text x="1595.8" y="924" font-family="Liberation Sans" font-size="18.5" font-weight="400" fill="#111" text-anchor="start" letter-spacing="-0.9" >Hz</text>
<rect x="1589.0" y="937.0" width="36" height="24" rx="0" fill="#aaaaaa" stroke="#555555" stroke-width="2" />
<text x="1592.2" y="956" font-family="Liberation Sans" font-size="18.5" font-weight="400" fill="#111" text-anchor="start" letter-spacing="-0.95" >Syn</text>
<circle cx="1607" cy="978.5" r="11.75" fill="#aaaaaa" stroke="#555" stroke-width="1.7"/>
<text x="1607" y="985.5" font-family="Liberation Sans" font-size="18.5" font-weight="400" fill="#111" text-anchor="middle" >R</text>
<path d="M1531.99,942.45 A23.6,23.6 0 1 1 1565.00,973.24" fill="none" stroke="#2d2d2d" stroke-width="3.9"/>
<path d="M1541.40,973.24 A23.6,23.6 0 0 1 1530.20,947.49" fill="none" stroke="#8ed6f8" stroke-width="3.9"/>
<line x1="1553.20" y1="952.80" x2="1529.09" y2="946.20" stroke="#2d2d2d" stroke-width="4.2" stroke-linecap="round"/>
<text x="1520.6" y="994" font-family="Liberation Sans" font-size="18.5" font-weight="400" fill="#000" text-anchor="start" letter-spacing="0.42" >1.00 Hz</text>
<rect x="1520" y="1012" width="104" height="26" rx="0" fill="#262626" />
<text x="1522.5" y="1032" font-family="Liberation Sans" font-size="19" font-weight="400" fill="#f4b850" text-anchor="start" letter-spacing="0.3" stroke="#f4b850" stroke-width="0.6" >Down</text>
<polygon points="1605.5,1020 1619,1020 1612.25,1030" fill="#f4b850"/>
<text x="1567.5" y="1060" font-family="Liberation Sans" font-size="18.5" font-weight="400" fill="#000" text-anchor="start" letter-spacing="-0.3" >Phase</text>
<rect x="1521.0" y="1067.0" width="24" height="24" rx="0" fill="#f4b850" stroke="#555555" stroke-width="2" />
<text x="1533" y="1086" font-family="Liberation Sans" font-size="18.5" font-weight="700" fill="#111" text-anchor="middle" >M</text>
<rect x="1555.0" y="1067.0" width="68" height="24" rx="0" fill="#8a8a8a" stroke="#555555" stroke-width="2" />
<text x="1567.85" y="1086" font-family="Liberation Sans" font-size="18.5" font-weight="400" fill="#000" text-anchor="start" letter-spacing="0.03" >50 %</text>
<text x="1567.5" y="1120" font-family="Liberation Sans" font-size="18.5" font-weight="400" fill="#000" text-anchor="start" letter-spacing="0.75" >Depth</text>
<path d="M1550.00,1152.00 A18,18 0 1 1 1568.00,1134.00" fill="none" stroke="#8ed6f8" stroke-width="4.2"/>
<line x1="1550.50" y1="1134.00" x2="1568.20" y2="1134.00" stroke="#2d2d2d" stroke-width="4.2" stroke-linecap="round"/>
<text x="1553.6" y="1153" font-family="Liberation Sans" font-size="18.5" font-weight="400" fill="#000" text-anchor="start" letter-spacing="0.47" >100 %</text>
<text x="1568.2" y="1187" font-family="Liberation Sans" font-size="18.5" font-weight="400" fill="#000" text-anchor="start" letter-spacing="0.92" >Offset</text>
<path d="M1550.00,1218.00 A18,18 0 0 1 1534.82,1190.33" fill="none" stroke="#2d2d2d" stroke-width="4.2"/>
<path d="M1540.89,1184.47 A18,18 0 0 1 1568.00,1200.00" fill="none" stroke="#2d2d2d" stroke-width="4.2"/>
<line x1="1550.00" y1="1200.00" x2="1536.21" y2="1186.21" stroke="#2d2d2d" stroke-width="4.2" stroke-linecap="round"/>
<polygon points="1526,1184.6 1535,1178.4 1535,1184.6" fill="#2d2d2d"/>
<text x="1553.9" y="1219.5" font-family="Liberation Sans" font-size="18.5" font-weight="400" fill="#000" text-anchor="start" letter-spacing="-0.65" >0 %</text>
<rect x="1758" y="900" width="2" height="326" rx="0" fill="#5e5e5e" />
<text x="1657.1" y="920" font-family="Liberation Sans" font-size="18.5" font-weight="400" fill="#000" text-anchor="start" letter-spacing="0.33" >Rate</text>
<rect x="1713.0" y="905.0" width="36" height="24" rx="0" fill="#f4b850" stroke="#555555" stroke-width="2" />
<text x="1719.8" y="924" font-family="Liberation Sans" font-size="18.5" font-weight="400" fill="#111" text-anchor="start" letter-spacing="-0.9" >Hz</text>
<rect x="1713.0" y="937.0" width="36" height="24" rx="0" fill="#aaaaaa" stroke="#555555" stroke-width="2" />
<text x="1716.2" y="956" font-family="Liberation Sans" font-size="18.5" font-weight="400" fill="#111" text-anchor="start" letter-spacing="-0.95" >Syn</text>
<circle cx="1731" cy="978.5" r="11.75" fill="#aaaaaa" stroke="#555" stroke-width="1.7"/>
<text x="1731" y="985.5" font-family="Liberation Sans" font-size="18.5" font-weight="400" fill="#111" text-anchor="middle" >R</text>
<path d="M1655.99,942.45 A23.6,23.6 0 1 1 1689.00,973.24" fill="none" stroke="#2d2d2d" stroke-width="3.9"/>
<path d="M1665.40,973.24 A23.6,23.6 0 0 1 1654.20,947.49" fill="none" stroke="#8ed6f8" stroke-width="3.9"/>
<line x1="1677.20" y1="952.80" x2="1653.09" y2="946.20" stroke="#2d2d2d" stroke-width="4.2" stroke-linecap="round"/>
<text x="1644.6" y="994" font-family="Liberation Sans" font-size="18.5" font-weight="400" fill="#000" text-anchor="start" letter-spacing="0.42" >1.00 Hz</text>
<rect x="1644" y="1012" width="104" height="26" rx="0" fill="#262626" />
<text x="1646.5" y="1032" font-family="Liberation Sans" font-size="19" font-weight="400" fill="#f4b850" text-anchor="start" letter-spacing="0.3" stroke="#f4b850" stroke-width="0.6" >Down</text>
<polygon points="1729.5,1020 1743,1020 1736.25,1030" fill="#f4b850"/>
<path d="M1644,1018 V1013 H1649" fill="none" stroke="#f4b850" stroke-width="2" />
<path d="M1747,1018 V1013 H1742" fill="none" stroke="#f4b850" stroke-width="2" />
<path d="M1644,1032 V1037 H1649" fill="none" stroke="#f4b850" stroke-width="2" />
<path d="M1747,1032 V1037 H1742" fill="none" stroke="#f4b850" stroke-width="2" />
<text x="1691.5" y="1060" font-family="Liberation Sans" font-size="18.5" font-weight="400" fill="#000" text-anchor="start" letter-spacing="-0.3" >Phase</text>
<rect x="1645.0" y="1067.0" width="24" height="24" rx="0" fill="#f4b850" stroke="#555555" stroke-width="2" />
<text x="1657" y="1086" font-family="Liberation Sans" font-size="18.5" font-weight="700" fill="#111" text-anchor="middle" >M</text>
<rect x="1679.0" y="1067.0" width="68" height="24" rx="0" fill="#8a8a8a" stroke="#555555" stroke-width="2" />
<text x="1691.65" y="1086" font-family="Liberation Sans" font-size="18.5" font-weight="400" fill="#000" text-anchor="start" letter-spacing="0.1" >75 %</text>
<text x="1691.5" y="1120" font-family="Liberation Sans" font-size="18.5" font-weight="400" fill="#000" text-anchor="start" letter-spacing="0.75" >Depth</text>
<path d="M1674.00,1152.00 A18,18 0 1 1 1692.00,1134.00" fill="none" stroke="#8ed6f8" stroke-width="4.2"/>
<line x1="1674.50" y1="1134.00" x2="1692.20" y2="1134.00" stroke="#2d2d2d" stroke-width="4.2" stroke-linecap="round"/>
<text x="1677.6" y="1153" font-family="Liberation Sans" font-size="18.5" font-weight="400" fill="#000" text-anchor="start" letter-spacing="0.47" >100 %</text>
<text x="1692.2" y="1187" font-family="Liberation Sans" font-size="18.5" font-weight="400" fill="#000" text-anchor="start" letter-spacing="0.92" >Offset</text>
<path d="M1674.00,1218.00 A18,18 0 0 1 1658.82,1190.33" fill="none" stroke="#2d2d2d" stroke-width="4.2"/>
<path d="M1664.89,1184.47 A18,18 0 0 1 1692.00,1200.00" fill="none" stroke="#2d2d2d" stroke-width="4.2"/>
<line x1="1674.00" y1="1200.00" x2="1660.21" y2="1186.21" stroke="#2d2d2d" stroke-width="4.2" stroke-linecap="round"/>
<polygon points="1650,1184.6 1659,1178.4 1659,1184.6" fill="#2d2d2d"/>
<text x="1677.9" y="1219.5" font-family="Liberation Sans" font-size="18.5" font-weight="400" fill="#000" text-anchor="start" letter-spacing="-0.65" >0 %</text>
<text x="1769.6" y="929" font-family="Liberation Sans" font-size="17.5" font-weight="400" fill="#111" text-anchor="start" letter-spacing="0.49" >ES-5 Expander</text>
<rect x="1773.0" y="943.0" width="144" height="23" rx="0" fill="#c6c6c6" stroke="#555555" stroke-width="2" />
<text x="1779.5" y="961" font-family="Liberation Sans" font-size="18.5" font-weight="400" fill="#000" text-anchor="start" letter-spacing="0.44" >Ext. Out</text>
<polygon points="1894,950 1908,950 1901,959" fill="#000"/>
<rect x="1773.0" y="975.0" width="144" height="23" rx="0" fill="#c6c6c6" stroke="#555555" stroke-width="2" />
<text x="1781" y="993" font-family="Liberation Sans" font-size="18.5" font-weight="400" fill="#000" text-anchor="start" >7/8</text>
<polygon points="1894,982 1908,982 1901,991" fill="#000"/>
<text x="1769.6" y="1041" font-family="Liberation Sans" font-size="17.5" font-weight="400" fill="#111" text-anchor="start" letter-spacing="0.5" >ESX-8CV Header</text>
<rect x="1773.0" y="1049.0" width="148" height="23" rx="0" fill="#c6c6c6" stroke="#555555" stroke-width="2" />
<text x="1781" y="1067" font-family="Liberation Sans" font-size="18.5" font-weight="400" fill="#000" text-anchor="start" >6</text>
<polygon points="1898,1056 1912,1056 1905,1065" fill="#000"/>
<rect x="1942" y="1008" width="4" height="80" rx="0" fill="#3a3a3a" />
<rect x="1942" y="1016" width="4" height="2" rx="0" fill="#9a9a9a" />
<circle cx="147" cy="1281" r="19" fill="#4b4b4b"/>
<path d="M139.3,1271 L158.6,1281 L139.3,1291 Z" fill="#6f6f6f" stroke="#6f6f6f" stroke-width="2.6" stroke-linejoin="round"/>
<rect x="185.0" y="1263.0" width="1036" height="38" rx="3.0" fill="#8a8a8a" stroke="#5a5a5a" stroke-width="6" />
<rect x="1243.0" y="1263.0" width="405" height="38" rx="3.0" fill="#8a8a8a" stroke="#4b4b4b" stroke-width="6" />
<text x="1676.4" y="1290" font-family="Liberation Sans" font-size="19" font-weight="700" fill="#111" text-anchor="start" letter-spacing="1.52" >1-MIDI</text>
<path d="M1662,1244 H1668 V1250 Q1668,1244 1662,1244 Z" fill="#4b4b4b" />
<path d="M1900,1244 H1906 Q1900,1244 1900,1250 Z" fill="#4b4b4b" />
<rect x="1752" y="1266" width="36" height="32" rx="0" fill="#8a8a8a" />
<rect x="1752" y="1266" width="36" height="3" rx="0" fill="#a9a9a9" />
<rect x="1792" y="1266" width="100" height="32" rx="0" fill="#8a8a8a" />
<rect x="1792" y="1266" width="81" height="3" rx="0" fill="#c8e8f6" />
<rect x="1873" y="1266" width="19" height="3" rx="0" fill="#d9ecf5" />
<rect x="1793" y="1266.5" width="3" height="2.0" rx="0" fill="#f4b850" />
<clipPath id="thc"><rect x="1752" y="1266" width="140" height="32"/></clipPath>
<g clip-path="url(#thc)">
<text x="1748.8" y="1292" font-family="Liberation Sans" font-size="17.5" font-weight="400" fill="#111" text-anchor="start" letter-spacing="0.67" >Spre</text>
<text x="1791.6" y="1292" font-family="Liberation Sans" font-size="17.5" font-weight="400" fill="#111" text-anchor="start" letter-spacing="-0.72" >ESX8CV</text>
<text x="1862.3" y="1292" font-family="Liberation Sans" font-size="17.5" font-weight="400" fill="#111" text-anchor="start" letter-spacing="2.45" >oct</text>
</g>
<rect x="1788" y="1266" width="4" height="32" rx="0" fill="#5a5a5a" />
<rect x="1750.0" y="1264.0" width="126" height="36" rx="0" fill="none" stroke="#000" stroke-width="4" />
<circle cx="1935" cy="1281" r="19" fill="#4b4b4b"/>
<path d="M1925.5,1289.3 L1935,1269.3 L1944.5,1289.3 Z" fill="#6f6f6f" stroke="#6f6f6f" stroke-width="2.6" stroke-linejoin="round"/>
<rect x="141.5" y="841.5" width="504" height="414" rx="0" fill="none" stroke="#e9432a" stroke-width="15" />
</svg>
</body></html>
